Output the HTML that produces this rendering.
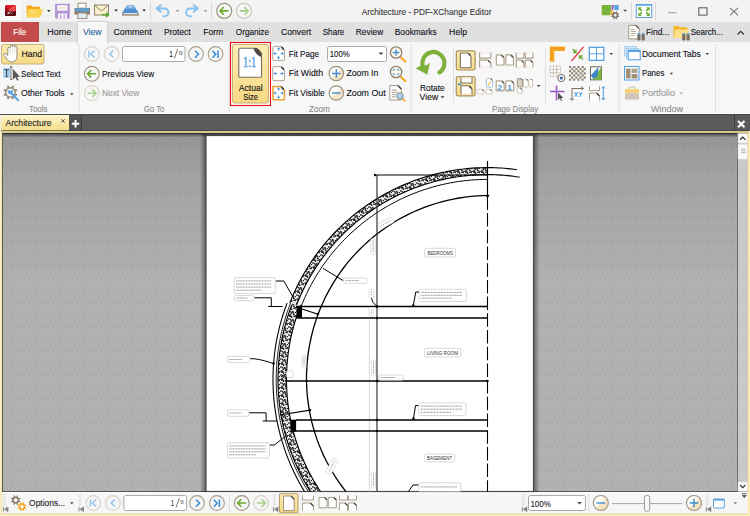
<!DOCTYPE html>
<html><head><meta charset="utf-8">
<style>
*{box-sizing:border-box;margin:0;padding:0}
html,body{width:750px;height:516px;overflow:hidden;background:#f3f3f3;font-family:"Liberation Sans",sans-serif;color:#1e1e1e}
.a{position:absolute}
svg text{white-space:pre}
#title{left:0;top:0;width:750px;height:22px;background:#f3f3f3}
#tabs{left:0;top:22px;width:750px;height:20.5px;background:#e0e0e0;border-bottom:1px solid #d4d4d4}
#ribbon{left:0;top:42px;width:750px;height:72px;background:#f7f7f7;border-bottom:1px solid #fdfdfd}
#doctabs{left:0;top:114px;width:750px;height:17px;background:#5b5b5b;border-top:1px solid #474747}
#frame{left:0;top:131px;width:750px;height:385px;background:#fde68c;border-left:1px solid #f7efdd;border-right:1px solid #f7eedb;border-bottom:1px solid #f7eed6}
#docarea{left:2px;top:133px;width:746px;height:359px;background:#a9a9a9;border-top:1px solid #2e3238;border-left:1px solid #5a5a5a;overflow:hidden}
#status{left:2px;top:491px;width:746px;height:23px;background:linear-gradient(#fdfdfd,#f6f6f6 3px);border-top:1px solid #555;border-bottom:1px solid #e2e2e0}

</style></head><body>
<div id="title" class="a"></div>
<div class="a" style="left:0;top:20px;width:750px;height:2px;background:#f0f0f0"></div>
<div id="tabs" class="a"></div>
<div class="a" style="left:1px;top:22px;width:38px;height:20.5px;background:#c24b4b"></div>
<div id="ribbon" class="a"></div>
<div class="a" style="left:76.5px;top:21px;width:31px;height:23px;background:#f7f7f7;border:1px solid #d2d2d2;border-bottom:none"></div>
<div id="doctabs" class="a"></div>
<div class="a" style="left:1px;top:114.5px;width:68px;height:17px;background:linear-gradient(#fdf3c6,#f9e49c 60%,#f7dc88);border-top:1px solid #fff6d8"></div>
<div class="a" style="left:69px;top:114.5px;width:13px;height:16px;background:#525252;border-right:1px solid #3e3e3e"></div>
<div class="a" style="left:734px;top:114.5px;width:1px;height:16px;background:#3e3e3e"></div>
<div class="a" style="left:0;top:114.5px;width:1px;height:17px;background:#ececec"></div>
<div id="frame" class="a"></div>
<div class="a" style="left:1px;top:131px;width:748px;height:2px;background:#d9cb86;box-shadow:0 -0.6px 0 #363b40"></div>
<div id="docarea" class="a"></div>
<div id="status" class="a"></div>

<svg class="a" style="left:0;top:0" width="260" height="22" viewBox="0 0 260 22">
 <rect x="1" y="1" width="21" height="19" fill="#f8f8f8"/>
 <line x1="22.5" y1="2" x2="22.5" y2="20" stroke="#e9e9e9"/>
 <!-- app icon -->
 <rect x="5" y="5" width="11" height="11" rx="1.6" fill="#dc1c26"/>
 <path d="M5 11.2 h11 v3.2 a1.6 1.6 0 0 1 -1.6 1.6 h-7.8 a1.6 1.6 0 0 1 -1.6 -1.6z" fill="#5c0a10"/>
 <path d="M5.5 5.5 L10.5 11.2 L5 11.2z" fill="#a8121c"/>
 <path d="M9.6 12.8 L15.2 6.6 M11.3 13.6 L15.8 8.6 M8.8 11.2 L13.2 6.2" stroke="#fff" stroke-width="0.85" stroke-dasharray="1 0.7"/>
 <path d="M7 13.8 L8.4 12 L9.8 13.8z" fill="#fff"/>
 <!-- folder -->
 <path d="M26.7 5.5 h4.5 l1.3 1.3 h7.5 v10.5 h-13.3z" fill="#f7a61a"/>
 <path d="M28.3 9 h14.7 l-2.6 8.3 h-13.6z" fill="#fdd352"/>
 <path d="M29.5 11 l9 -1 -6 5z" fill="#fde08a" opacity="0.6"/>
 <path d="M47 10 h3.6 l-1.8 2z" fill="#222"/>
 <!-- floppy -->
 <path d="M55 3.8 h14.8 v14.8 h-13.5 l-1.3 -1.3z" fill="#b597d4"/>
 <rect x="57.4" y="5.3" width="10" height="5.3" fill="#fff"/>
 <rect x="58.5" y="6.8" width="7.8" height="2.5" fill="#ece8dc"/>
 <rect x="58.2" y="13.6" width="8.6" height="5" fill="#fff"/>
 <rect x="60" y="14.5" width="1.4" height="4" fill="#b597d4"/>
 <rect x="63.5" y="14.5" width="1.4" height="4" fill="#b597d4"/>
 <!-- printer -->
 <rect x="78" y="3.2" width="8" height="5" fill="#fff" stroke="#9e9078" stroke-width="1"/>
 <path d="M74.5 8 h15.5 v6.5 h-15.5z" fill="#8c7d66"/>
 <rect x="75.5" y="8.3" width="13.5" height="3.2" fill="#5aa0dc"/>
 <rect x="77.8" y="13" width="9" height="5.5" fill="#dff0f8" stroke="#9e9078" stroke-width="1"/>
 <!-- mail -->
 <rect x="94.5" y="5" width="14" height="10" fill="#fbefcf" stroke="#8f8270" stroke-width="1"/>
 <path d="M94.5 5 L101.5 11 L108.5 5" fill="none" stroke="#8f8270" stroke-width="1"/>
 <path d="M102 14.7 h6.5 M106 12.5 l2.5 2.2 -2.5 2.2" fill="none" stroke="#5aa528" stroke-width="1.5"/>
 <path d="M114.3 9.5 h3.6 l-1.8 2z" fill="#222"/>
 <!-- scanner -->
 <path d="M127 5.5 h6.8 l5 7.8 h-17z" fill="#4d8fd0"/>
 <path d="M127 5.5 h6.8 l2 3.2 h-10.5z" fill="#7ab4e6"/>
 <rect x="129" y="6.3" width="2.5" height="1" fill="#fff"/>
 <rect x="122" y="13.3" width="16.8" height="2.3" fill="#8d7f6b"/>
 <rect x="123.5" y="13.3" width="14" height="1" fill="#fff"/>
 <path d="M142.3 9.5 h3.6 l-1.8 2z" fill="#222"/>
 <line x1="150.5" y1="2" x2="150.5" y2="20" stroke="#dadada"/>
 <!-- undo -->
 <path d="M160.8 5.2 L156.6 8.5 L160.8 11.8 M157 8.5 H164.5 A3.9 3.9 0 0 1 164.5 16.3 H163.5" fill="none" stroke="#86c0ec" stroke-width="2" stroke-linecap="round" stroke-linejoin="round"/>
 <path d="M176 10.2 h3.2 l-1.6 1.8z" fill="#777"/>
 <!-- redo -->
 <path d="M193.7 5.2 L197.9 8.5 L193.7 11.8 M197.5 8.5 H190 A3.9 3.9 0 0 0 190 16.3 H191" fill="none" stroke="#86c0ec" stroke-width="2" stroke-linecap="round" stroke-linejoin="round"/>
 <path d="M204 10.2 h3.2 l-1.6 1.8z" fill="#777"/>
 <line x1="211.5" y1="2" x2="211.5" y2="20" stroke="#dadada"/>
 <!-- back / fwd -->
 <circle cx="224.2" cy="10.9" r="7.5" fill="#f7f7f7" stroke="#9c927f" stroke-width="1.2"/>
 <path d="M220 10.9 h8.5 M223.8 7 l-3.8 3.9 3.8 3.9" fill="none" stroke="#6aab2e" stroke-width="1.6"/>
 <circle cx="244" cy="10.9" r="7.5" fill="#f7f7f7" stroke="#cfc9bd" stroke-width="1.2"/>
 <path d="M248.2 10.9 h-8.5 M244.4 7 l3.8 3.9 -3.8 3.9" fill="none" stroke="#a8d08a" stroke-width="1.6"/>
</svg>
<svg class="a" style="left:596px;top:0" width="154" height="22" viewBox="596 0 154 22">
 <!-- theme icon -->
 <path d="M603.2 5 h8.6 l-1.8 10.3 h-7.5 a0.8 0.8 0 0 1 -0.8 -0.8 v-8.7 a0.8 0.8 0 0 1 0.8 -0.8z" fill="#7ab33c"/>
 <path d="M612.2 5 h1.8 l-0.9 5 h-1.8z" fill="#9b59c8"/>
 <path d="M611.1 10.3 h1.8 l-0.9 5 h-1.8z" fill="#f5b030"/>
 <rect x="614.2" y="5" width="4.6" height="5" fill="#5aa5e0"/>
 <path d="M618.20 15.20 L618.13 15.85 L619.23 16.37 L618.88 17.22 L617.73 16.81 L617.32 17.32 L616.81 17.73 L617.22 18.88 L616.37 19.23 L615.85 18.13 L615.20 18.20 L614.55 18.13 L614.03 19.23 L613.18 18.88 L613.59 17.73 L613.08 17.32 L612.67 16.81 L611.52 17.22 L611.17 16.37 L612.27 15.85 L612.20 15.20 L612.27 14.55 L611.17 14.03 L611.52 13.18 L612.67 13.59 L613.08 13.08 L613.59 12.67 L613.18 11.52 L614.03 11.17 L614.55 12.27 L615.20 12.20 L615.85 12.27 L616.37 11.17 L617.22 11.52 L616.81 12.67 L617.32 13.08 L617.73 13.59 L618.88 13.18 L619.23 14.03 L618.13 14.55Z M615.2 13.70 a1.50 1.50 0 1 0 0.01 0z" fill="#7a6f5f" fill-rule="evenodd"/>
 <path d="M623.3 9.8 h3.6 l-1.8 2z" fill="#333"/>
 <line x1="631.5" y1="2" x2="631.5" y2="20" stroke="#dadada"/>
 <rect x="636.3" y="4.5" width="15.4" height="13" fill="#fff" stroke="#5aa0dc" stroke-width="1"/>
 <rect x="636.3" y="4.5" width="15.4" height="1.2" fill="#5aa0dc"/>
 <g fill="#6aab2e">
  <path d="M638.3 7.3 h3.5 l-1.2 1.2 1.8 1.8 -1.2 1.2 -1.8 -1.8 -1.1 1.1z"/>
  <path d="M649.7 7.3 h-3.5 l1.2 1.2 -1.8 1.8 1.2 1.2 1.8 -1.8 1.1 1.1z"/>
  <path d="M638.3 16 h3.5 l-1.2 -1.2 1.8 -1.8 -1.2 -1.2 -1.8 1.8 -1.1 -1.1z"/>
  <path d="M649.7 16 h-3.5 l1.2 -1.2 -1.8 -1.8 1.2 -1.2 1.8 1.8 1.1 -1.1z"/>
 </g>
 <line x1="655.5" y1="2" x2="655.5" y2="20" stroke="#dadada"/>
 <line x1="668" y1="12.8" x2="676.5" y2="12.8" stroke="#999" stroke-width="1"/>
 <rect x="698.8" y="7.8" width="8.2" height="7.3" fill="none" stroke="#555" stroke-width="1"/>
 <path d="M730 7.8 L738 15.3 M738 7.8 L730 15.3" stroke="#444" stroke-width="1"/>
</svg>
<svg class="a" style="left:620px;top:22px" width="130" height="20" viewBox="620 22 130 20">
 <path d="M628.8 25.3 h7 l3.3 3.3 v10.3 h-10.3z" fill="#fff" stroke="#a09580" stroke-width="1"/>
 <path d="M635.8 25.3 l3.3 3.3" stroke="#555" stroke-width="1.3"/>
 <path d="M630.8 29.5 h3.5 M630.8 31.5 h5 M630.8 33.5 h5 M630.8 35.5 h4" stroke="#a09580" stroke-width="0.8"/>
 <rect x="637.3" y="34" width="3.2" height="6.5" rx="1" fill="#7a6f5f"/>
 <rect x="641.6" y="34" width="3.2" height="6.5" rx="1" fill="#7a6f5f"/>
 <rect x="637.6" y="33" width="2.6" height="1.6" fill="#5aa0dc"/>
 <rect x="641.9" y="33" width="2.6" height="1.6" fill="#5aa0dc"/>
 <path d="M673.5 26 h5 l1.3 1.3 h7.5 v10.7 h-13.8z" fill="#f7b32a"/>
 <path d="M674.8 29.5 h14.5 l-2.3 8.5 h-13z" fill="#fde08a"/>
 <rect x="682.2" y="34" width="3.2" height="6.5" rx="1" fill="#7a6f5f"/>
 <rect x="686.5" y="34" width="3.2" height="6.5" rx="1" fill="#7a6f5f"/>
 <rect x="682.5" y="33" width="2.6" height="1.6" fill="#5aa0dc"/>
 <rect x="686.8" y="33" width="2.6" height="1.6" fill="#5aa0dc"/>
 <path d="M737.5 34.5 l3.2 -3.2 3.2 3.2" fill="none" stroke="#333" stroke-width="1.2"/>
</svg>
<svg class="a" style="left:0;top:42px" width="750" height="72" viewBox="0 42 750 72">
 <defs>
  <linearGradient id="yel" x1="0" y1="0" x2="0" y2="1"><stop offset="0" stop-color="#fcedb5"/><stop offset="1" stop-color="#f7d983"/></linearGradient>
  <linearGradient id="cream" x1="0" y1="0" x2="1" y2="1"><stop offset="0.45" stop-color="#fdfbf5"/><stop offset="0.55" stop-color="#f3e3c3"/></linearGradient>
 </defs>
 <!-- Tools group -->
 <rect x="1.5" y="44.5" width="42.5" height="19.5" rx="2" fill="url(#yel)" stroke="#c8b07c" stroke-width="1"/>
 <path d="M7.8 55.5 V48.3 a1.15 1.15 0 0 1 2.3 0 V46.6 a1.15 1.15 0 0 1 2.3 0 V46.2 a1.15 1.15 0 0 1 2.3 0 V47.2 a1.15 1.15 0 0 1 2.3 0 V56 c0 3.8 -2.2 6 -5 6 c-2.4 0 -3.6 -1 -5 -2.8 l-3 -3.6 a1.3 1.3 0 0 1 2 -1.7 z" fill="#fff" stroke="#8a8070" stroke-width="0.9"/>
 <path d="M10.1 48.3 v5 M12.4 46.6 v6.5 M14.7 47.2 v6" stroke="#d8d4cc" stroke-width="0.7"/>
 <rect x="3.1" y="67.9" width="6.8" height="9.9" fill="#a8d0f0"/>
 <path d="M4.3 69.8 h4.6 M6.6 69.8 v6.8 M5.6 76.6 h2" stroke="#2a2a3a" stroke-width="0.9" fill="none"/>
 <rect x="10.2" y="66.8" width="1.8" height="12.5" fill="#dadada" stroke="#777" stroke-width="0.5"/><path d="M10 66.7 h2.2 M10 79.4 h2.2" stroke="#555" stroke-width="0.8"/>
 <path d="M13 69 v10.5 l2.5 -2.3 l1.7 3.6 l1.5 -0.7 l-1.7 -3.4 h3z" fill="#5a5a5a"/>
 <path d="M15.70 92.40 L15.61 93.39 L17.30 94.06 L16.45 96.11 L14.78 95.38 L14.15 96.15 L13.38 96.78 L14.11 98.45 L12.06 99.30 L11.39 97.61 L10.40 97.70 L9.41 97.61 L8.74 99.30 L6.69 98.45 L7.42 96.78 L6.65 96.15 L6.02 95.38 L4.35 96.11 L3.50 94.06 L5.19 93.39 L5.10 92.40 L5.19 91.41 L3.50 90.74 L4.35 88.69 L6.02 89.42 L6.65 88.65 L7.42 88.02 L6.69 86.35 L8.74 85.50 L9.41 87.19 L10.40 87.10 L11.39 87.19 L12.06 85.50 L14.11 86.35 L13.38 88.02 L14.15 88.65 L14.78 89.42 L16.45 88.69 L17.30 90.74 L15.61 91.41Z M10.4 88.4 a4 4 0 1 0 0.01 0z" fill="#978c7a" fill-rule="evenodd"/>
 <path d="M11 93 L18.3 100.3" stroke="#5aa5e6" stroke-width="2" stroke-linecap="round"/>
 <path d="M8.2 90.2 a2.6 2.6 0 1 0 3.8 -0.6 l-1.6 1.6 -1.3 -1.3 z" fill="#5aa5e6"/>
 <path d="M70 93.3 h3.6 l-1.8 2z" fill="#444"/>
 <line x1="79" y1="44" x2="79" y2="112.5" stroke="#e0e0e0"/>
 <!-- Go To -->
 <circle cx="91.8" cy="54" r="7.4" fill="#f7f7f7" stroke="#d8d2c6" stroke-width="1.1"/>
 <path d="M89 50.5 v7 M94.5 50.5 l-3.5 3.5 3.5 3.5" fill="none" stroke="#8cc0ea" stroke-width="1.4"/>
 <circle cx="111.6" cy="54" r="7.4" fill="#f7f7f7" stroke="#d8d2c6" stroke-width="1.1"/>
 <path d="M113.3 50.5 l-3.5 3.5 3.5 3.5" fill="none" stroke="#8cc0ea" stroke-width="1.4"/>
 <rect x="122.5" y="46.5" width="62.5" height="15" rx="2" fill="#fff" stroke="#a9a9a9" stroke-width="1"/>
 <circle cx="196" cy="54" r="7.4" fill="#f7f7f7" stroke="#a89d88" stroke-width="1.1"/>
 <path d="M195 50.7 l3.5 3.5 -3.5 3.5" fill="none" stroke="#3d8fd8" stroke-width="1.6"/>
 <circle cx="215.6" cy="54" r="7.4" fill="#f7f7f7" stroke="#a89d88" stroke-width="1.1"/>
 <path d="M212.5 50.7 l3.2 3.5 -3.2 3.5 M218 50.5 v7.4" fill="none" stroke="#3d8fd8" stroke-width="1.6"/>
 <circle cx="91.8" cy="73.8" r="7.4" fill="#f7f7f7" stroke="#9c927f" stroke-width="1.1"/>
 <path d="M87.6 73.8 h8.5 M91.3 70 l-3.7 3.8 3.7 3.8" fill="none" stroke="#6aab2e" stroke-width="1.6"/>
 <circle cx="91.8" cy="93.2" r="7.4" fill="#f7f7f7" stroke="#d8d2c6" stroke-width="1.1"/>
 <path d="M96 93.2 h-8.5 M92.3 89.4 l3.7 3.8 -3.7 3.8" fill="none" stroke="#a8d08a" stroke-width="1.6"/>
 <path d="M177.6 49.2 L174.3 58.6" stroke="#666" stroke-width="0.9"/>
 <line x1="229.3" y1="44" x2="229.3" y2="112.5" stroke="#e0e0e0"/>
 <!-- Zoom -->
 <rect x="230.5" y="42.5" width="40" height="63" fill="none" stroke="#f01010" stroke-width="1.1"/>
 <rect x="232.5" y="44.5" width="36" height="58.5" rx="2" fill="url(#yel)" stroke="#c8b07c" stroke-width="1"/>
 <path d="M239.8 48.3 h16.7 l5 5 v23 a1 1 0 0 1 -1 1 h-20.7 a1 1 0 0 1 -1 -1 v-27 a1 1 0 0 1 1 -1z" fill="#fff" stroke="#7a6e60" stroke-width="1.1"/>
 <path d="M253.5 48.3 H256.5 Q261.5 50.5 261.5 57 Q255.5 55.5 253.5 48.3z" fill="#4f4a44"/>
 <text x="243" y="67.4" font-size="14" fill="#4a9be0" font-family="Liberation Serif" stroke="#4a9be0" stroke-width="0.4" textLength="13.3" lengthAdjust="spacingAndGlyphs">1:1</text>
 <path d="M273.6 46.6 H281.0 L284.5 50.4 V59.6 a0.8 0.8 0 0 1 -0.8 0.8 H273.6 a0.8 0.8 0 0 1 -0.8 -0.8 V47.4 a0.8 0.8 0 0 1 0.8 -0.8z" fill="#fff" stroke="#b0a590" stroke-width="1"/><path d="M280.7 46.6 H282.0 Q284.5 47.6 284.5 50.5 Q281.3 49.800000000000004 280.7 46.6z" fill="#4f4a44"/>
 <path d="M278.6 47.3 L276.8 49.3 L280.40000000000003 49.3z M278.1 49.3 v1.5 h1 v-1.5z" fill="#4a9be0"/><path d="M278.6 59.5 L276.8 57.5 L280.40000000000003 57.5z M278.1 57.5 v-1.5 h1 v1.5z" fill="#4a9be0"/><path d="M273.2 53.5 L275.2 51.7 L275.2 55.3z M275.2 53.0 h1.5 v1 h-1.5z" fill="#4a9be0"/><path d="M284 53.5 L282 51.7 L282 55.3z M282 53.0 h-1.5 v1 h1.5z" fill="#4a9be0"/>
 <path d="M273.6 66.6 H281.0 L284.5 70.39999999999999 V79.8 a0.8 0.8 0 0 1 -0.8 0.8 H273.6 a0.8 0.8 0 0 1 -0.8 -0.8 V67.39999999999999 a0.8 0.8 0 0 1 0.8 -0.8z" fill="#fff" stroke="#b0a590" stroke-width="1"/><path d="M280.7 66.6 H282.0 Q284.5 67.6 284.5 70.5 Q281.3 69.8 280.7 66.6z" fill="#4f4a44"/>
 <path d="M273.5 73.6 L275.5 71.8 L275.5 75.39999999999999z M275.5 73.1 h1.5 v1 h-1.5z" fill="#4a9be0"/><path d="M283.7 73.6 L281.7 71.8 L281.7 75.39999999999999z M281.7 73.1 h-1.5 v1 h1.5z" fill="#4a9be0"/>
 <path d="M273.7 86.4 H280.9 L284.4 90.2 V99.0 a0.8 0.8 0 0 1 -0.8 0.8 H273.7 a0.8 0.8 0 0 1 -0.8 -0.8 V87.2 a0.8 0.8 0 0 1 0.8 -0.8z" fill="#fff" stroke="#f0a030" stroke-width="1.5"/><path d="M280.59999999999997 86.4 H281.9 Q284.4 87.4 284.4 90.30000000000001 Q281.2 89.60000000000001 280.59999999999997 86.4z" fill="#4f4a44"/>
 <path d="M278.6 87.2 L276.8 89.2 L280.40000000000003 89.2z M278.1 89.2 v1.5 h1 v-1.5z" fill="#4a9be0"/><path d="M278.6 98.8 L276.8 96.8 L280.40000000000003 96.8z M278.1 96.8 v-1.5 h1 v1.5z" fill="#4a9be0"/><path d="M273.3 93 L275.3 91.2 L275.3 94.8z M275.3 92.5 h1.5 v1 h-1.5z" fill="#4a9be0"/><path d="M283.9 93 L281.9 91.2 L281.9 94.8z M281.9 92.5 h-1.5 v1 h1.5z" fill="#4a9be0"/>
 <rect x="327.5" y="46.5" width="59" height="15" rx="2" fill="#fff" stroke="#a9a9a9" stroke-width="1"/>
 <path d="M378.6 52.5 h4.8 l-2.4 2.5z" fill="#444"/>
 <circle cx="336.3" cy="73.5" r="7.2" fill="url(#cream)" stroke="#9c927f" stroke-width="1.2"/>
 <path d="M332 73.5 h8.6 M336.3 69.2 v8.6" stroke="#3d8fd8" stroke-width="1.4"/>
 <circle cx="336.3" cy="93" r="7.2" fill="url(#cream)" stroke="#9c927f" stroke-width="1.2"/>
 <path d="M332 93 h8.6" stroke="#3d8fd8" stroke-width="1.4"/>
 <path d="M401 57.5 l4.2 4" stroke="#f5a623" stroke-width="2.2" stroke-linecap="round"/>
 <circle cx="396.1" cy="52.5" r="5.7" fill="#fdf6e6" stroke="#8d826f" stroke-width="1.3"/>
 <path d="M392.8 52.5 h6.6 M396.1 49.2 v6.6" stroke="#3d8fd8" stroke-width="1.3"/>
 <path d="M401 77 l4.2 4" stroke="#f5a623" stroke-width="2.2" stroke-linecap="round"/>
 <circle cx="396.1" cy="72" r="5.7" fill="#fdf6e6" stroke="#8d826f" stroke-width="1.3"/>
 <path d="M393.5 71 v-1.5 h1.5 M397.2 69.5 h1.5 v1.5 M398.7 73 v1.5 h-1.5 M395 74.5 h-1.5 v-1.5" stroke="#4a9be0" stroke-width="0.9" fill="none"/>
 <path d="M389.8 85.5 h8 l3.5 3.5 v11 h-11.5z" fill="#fff" stroke="#a59a88" stroke-width="1"/>
 <path d="M397.8 85.5 l3.5 3.5" stroke="#444" stroke-width="1.5"/>
 <path d="M391.8 90 h5 M391.8 92.3 h6 M391.8 94.6 h4 M391.8 96.9 h4" stroke="#8d826f" stroke-width="0.8"/>
 <path d="M402 98 l3 3" stroke="#f5a623" stroke-width="1.6" stroke-linecap="round"/>
 <circle cx="400" cy="96" r="3.3" fill="#a9d0f0" stroke="#8d826f" stroke-width="0.9"/>
 <line x1="411" y1="44" x2="411" y2="112.5" stroke="#e0e0e0"/>
 <!-- Rotate view -->
 <path d="M439.3 72.5 A11.1 11.1 0 1 0 422.4 64.6" fill="none" stroke="#7db13c" stroke-width="4.2" stroke-linecap="round"/>
 <path d="M415.8 68.2 L427.3 74.8 L430 62.5 L426.5 65.5 L423 64.5z" fill="#7db13c"/>
 <path d="M440.5 96.3 h4 l-2 2.2z" fill="#444"/>
 <line x1="453.5" y1="48" x2="453.5" y2="103" stroke="#e0e0e0"/>
 <!-- Page display -->
 <rect x="456.3" y="50.8" width="18.8" height="19.2" rx="1.8" fill="url(#yel)" stroke="#a89060" stroke-width="1.2"/>
 <path d="M461.1 53 H467.8 L471 56.2 V67.0 a0.8 0.8 0 0 1 -0.8 0.8 H461.1 a0.8 0.8 0 0 1 -0.8 -0.8 V53.8 a0.8 0.8 0 0 1 0.8 -0.8z" fill="#fff" stroke="#7a6e60" stroke-width="1.1"/><path d="M467.8 53 H469.08 Q471 53.96 471 56.20 Q468.28 55.72 467.8 53z" fill="#4f4a44"/>
 <rect x="456.3" y="76.6" width="18.8" height="19.2" rx="1.8" fill="url(#yel)" stroke="#a89060" stroke-width="1.2"/>
 <path d="M461 77.5 V83 H472 V77.5" fill="#fff" stroke="#7a6e60" stroke-width="1.1"/><rect x="461.6" y="77.5" width="9.8" height="1.2" fill="#f6e3dc"/>
 <path d="M461 94.5 V85.8 H468.8 L472 89.0 V94.5" fill="#fff" stroke="#7a6e60" stroke-width="1.1"/><path d="M468.8 85.8 H470.08 Q472 86.76 472 89.00 Q469.28 88.52 468.8 85.8z" fill="#4f4a44"/><rect x="461.6" y="93.3" width="9.8" height="1.2" fill="#f6e3dc"/>
 <path d="M458 84.4 h3.2" stroke="#3d8fd8" stroke-width="1.4"/><path d="M457.5 84.4 l1.6 -1.3 v2.6z" fill="#3d8fd8"/>
 <path d="M479.6 52.6 V58.2 H490.8 V52.6" fill="#fff" stroke="#ada28e" stroke-width="1.2"/><rect x="480.20000000000005" y="52.6" width="10.0" height="1.2" fill="#f6e3dc"/>
 <path d="M479.6 67.6 V60.2 H487.8 L490.8 63.2 V67.6" fill="#fff" stroke="#ada28e" stroke-width="1.2"/><path d="M487.8 60.2 H489.00 Q490.8 61.10 490.8 63.20 Q488.25 62.75 487.8 60.2z" fill="#4f4a44"/><rect x="480.20000000000005" y="66.39999999999999" width="10.0" height="1.2" fill="#f6e3dc"/>
 <path d="M497.1 54.8 H501 L504 57.8 V64.2 a0.8 0.8 0 0 1 -0.8 0.8 H497.1 a0.8 0.8 0 0 1 -0.8 -0.8 V55.599999999999994 a0.8 0.8 0 0 1 0.8 -0.8z" fill="#fff" stroke="#ada28e" stroke-width="1.2"/><path d="M501 54.8 H502.20 Q504 55.70 504 57.80 Q501.45 57.35 501 54.8z" fill="#4f4a44"/>
 <path d="M506.6 54.8 H510.5 L513.5 57.8 V64.2 a0.8 0.8 0 0 1 -0.8 0.8 H506.6 a0.8 0.8 0 0 1 -0.8 -0.8 V55.599999999999994 a0.8 0.8 0 0 1 0.8 -0.8z" fill="#fff" stroke="#ada28e" stroke-width="1.2"/><path d="M510.5 54.8 H511.70 Q513.5 55.70 513.5 57.80 Q510.95 57.35 510.5 54.8z" fill="#4f4a44"/>
 <path d="M516.3 52.6 V58.2 H523.9 V52.6" fill="#fff" stroke="#ada28e" stroke-width="1.2"/><rect x="516.9" y="52.6" width="6.4" height="1.2" fill="#f6e3dc"/>
 <path d="M525.2 52.6 V58.2 H532.8 V52.6" fill="#fff" stroke="#ada28e" stroke-width="1.2"/><rect x="525.8000000000001" y="52.6" width="6.4" height="1.2" fill="#f6e3dc"/>
 <path d="M516.3 67.6 V60.2 H521.3 L523.9 62.800000000000004 V67.6" fill="#fff" stroke="#ada28e" stroke-width="1.2"/><path d="M521.3 60.2 H522.34 Q523.9 60.98 523.9 62.80 Q521.69 62.41 521.3 60.2z" fill="#4f4a44"/><rect x="516.9" y="66.39999999999999" width="6.4" height="1.2" fill="#f6e3dc"/>
 <path d="M525.2 67.6 V60.2 H530.1999999999999 L532.8 62.800000000000004 V67.6" fill="#fff" stroke="#ada28e" stroke-width="1.2"/><path d="M530.1999999999999 60.2 H531.24 Q532.8 60.98 532.8 62.80 Q530.59 62.41 530.1999999999999 60.2z" fill="#4f4a44"/><rect x="525.8000000000001" y="66.39999999999999" width="6.4" height="1.2" fill="#f6e3dc"/>
 <path d="M478.5 89.3 H481.8 L483.8 91.3 V93.2 a0.8 0.8 0 0 1 -0.8 0.8 H478.5 a0.8 0.8 0 0 1 -0.8 -0.8 V90.1 a0.8 0.8 0 0 1 0.8 -0.8z" fill="#fff" stroke="#cfc6b6" stroke-width="0.9"/><path d="M481.8 89.3 H482.60 Q483.8 89.90 483.8 91.30 Q482.10 91.00 481.8 89.3z" fill="#4f4a44"/>
 <path d="M486.7 89.3 H490 L492 91.3 V93.2 a0.8 0.8 0 0 1 -0.8 0.8 H486.7 a0.8 0.8 0 0 1 -0.8 -0.8 V90.1 a0.8 0.8 0 0 1 0.8 -0.8z" fill="#fff" stroke="#cfc6b6" stroke-width="0.9"/><path d="M490 89.3 H490.80 Q492 89.90 492 91.30 Q490.30 91.00 490 89.3z" fill="#4f4a44"/>
 <path d="M487.2 78.6 H490.40000000000003 L492.6 80.8 V86.2 a0.8 0.8 0 0 1 -0.8 0.8 H487.2 a0.8 0.8 0 0 1 -0.8 -0.8 V79.39999999999999 a0.8 0.8 0 0 1 0.8 -0.8z" fill="#fff" stroke="#8cc0ea" stroke-width="0.9"/><path d="M490.40000000000003 78.6 H491.28 Q492.6 79.26 492.6 80.80 Q490.73 80.47 490.40000000000003 78.6z" fill="#4f4a44"/>
 <path d="M487.8 85.5 L491 81.5" stroke="#f0b040" stroke-width="1.2"/>
 <path d="M497.0 80.9 H501.59999999999997 L504.2 83.5 V90.0 a0.8 0.8 0 0 1 -0.8 0.8 H497.0 a0.8 0.8 0 0 1 -0.8 -0.8 V81.7 a0.8 0.8 0 0 1 0.8 -0.8z" fill="#fff" stroke="#ada28e" stroke-width="1.2"/><path d="M501.59999999999997 80.9 H502.64 Q504.2 81.68 504.2 83.50 Q501.99 83.11 501.59999999999997 80.9z" fill="#4f4a44"/>
 <path d="M506.6 80.9 H511.19999999999993 L513.8 83.5 V90.0 a0.8 0.8 0 0 1 -0.8 0.8 H506.6 a0.8 0.8 0 0 1 -0.8 -0.8 V81.7 a0.8 0.8 0 0 1 0.8 -0.8z" fill="#fff" stroke="#ada28e" stroke-width="1.2"/><path d="M511.19999999999993 80.9 H512.24 Q513.8 81.68 513.8 83.50 Q511.59 83.11 511.19999999999993 80.9z" fill="#4f4a44"/>
 <text x="497.6" y="89.8" font-size="8" font-weight="bold" fill="#3d8fd8" font-family="Liberation Sans">2</text>
 <text x="507.3" y="89.8" font-size="8" font-weight="bold" fill="#3d8fd8" font-family="Liberation Sans">1</text>
 <path d="M518.0999999999999 78.6 H520.6 L522.6 80.6 V86.2 a0.8 0.8 0 0 1 -0.8 0.8 H518.0999999999999 a0.8 0.8 0 0 1 -0.8 -0.8 V79.39999999999999 a0.8 0.8 0 0 1 0.8 -0.8z" fill="#d8d0c4" stroke="#a09580" stroke-width="1"/><path d="M520.6 78.6 H521.40 Q522.6 79.20 522.6 80.60 Q520.90 80.30 520.6 78.6z" fill="#4f4a44"/>
 <path d="M524.3 79 H526.3 L528.3 81 V86.2 a0.8 0.8 0 0 1 -0.8 0.8 H524.3 a0.8 0.8 0 0 1 -0.8 -0.8 V79.8 a0.8 0.8 0 0 1 0.8 -0.8z" fill="#fff" stroke="#cfc6b6" stroke-width="1"/><path d="M526.3 79 H527.10 Q528.3 79.60 528.3 81.00 Q526.60 80.70 526.3 79z" fill="#4f4a44"/>
 <path d="M529.8 79 H531.1 L532.6 80.5 V86.2 a0.8 0.8 0 0 1 -0.8 0.8 H529.8 a0.8 0.8 0 0 1 -0.8 -0.8 V79.8 a0.8 0.8 0 0 1 0.8 -0.8z" fill="#fff" stroke="#cfc6b6" stroke-width="1"/><path d="M531.1 79 H531.70 Q532.6 79.45 532.6 80.50 Q531.33 80.28 531.1 79z" fill="#4f4a44"/>
 <path d="M518.0999999999999 88 H520.3 L522.3 90 V92.4 a0.8 0.8 0 0 1 -0.8 0.8 H518.0999999999999 a0.8 0.8 0 0 1 -0.8 -0.8 V88.8 a0.8 0.8 0 0 1 0.8 -0.8z" fill="#fff" stroke="#cfc6b6" stroke-width="1"/><path d="M520.3 88 H521.10 Q522.3 88.60 522.3 90.00 Q520.60 89.70 520.3 88z" fill="#4f4a44"/>
 <path d="M537 85 h3.6 l-1.8 2z" fill="#444"/>
 <line x1="545.5" y1="48" x2="545.5" y2="103" stroke="#e0e0e0"/>
 <!-- ruler -->
 <path d="M549.8 46.5 h15.3 v4.5 h-10.8 v10.8 h-4.5z" fill="#f5a623"/>
 <path d="M552 47.5 v1.5 M554.5 47.5 v1.5 M557 47.5 v1.5 M559.5 47.5 v1.5 M562 47.5 v1.5 M550.8 53 h1.5 M550.8 55.5 h1.5 M550.8 58 h1.5" stroke="#c77a10" stroke-width="0.6"/>
 <path d="M571.5 61 L583.5 47" stroke="#e04040" stroke-width="1.3"/>
 <path d="M572.5 49 l3.5 3.5 M576 49.5 v3 h-3 M583 59.5 l-3.5 -3.5 M579.5 59 v-3 h3" stroke="#6aab2e" stroke-width="1.3" fill="none"/>
 <rect x="589.3" y="47.3" width="14.5" height="13" fill="#fff" stroke="#4a9be0" stroke-width="1.2"/>
 <path d="M596.5 47.3 v13 M589.3 53.8 h14.5" stroke="#4a9be0" stroke-width="0.9"/>
 <path d="M609.5 53 h3.6 l-1.8 2z" fill="#444"/>
 <g fill="#fff" stroke="#c5bcac" stroke-width="0.7">
  <rect x="550" y="66" width="3.3" height="3.3"/><rect x="553.5" y="66" width="3.3" height="3.3"/><rect x="557" y="66" width="3.3" height="3.3"/>
  <rect x="550" y="69.5" width="3.3" height="3.3"/><rect x="553.5" y="69.5" width="3.3" height="3.3"/><rect x="557" y="69.5" width="3.3" height="3.3"/>
  <rect x="550" y="73" width="3.3" height="3.3"/><rect x="553.5" y="73" width="3.3" height="3.3"/>
 </g>
 <circle cx="561.3" cy="78" r="3.6" fill="#fff" stroke="#6b6355" stroke-width="1"/>
 <circle cx="561.3" cy="78" r="1.6" fill="#2c5f9a"/>
 <g fill="#8d826f">
  <rect x="569" y="66" width="2.1" height="2.1"/><rect x="573.2" y="66" width="2.1" height="2.1"/><rect x="577.4" y="66" width="2.1" height="2.1"/><rect x="581.6" y="66" width="2.1" height="2.1"/>
  <rect x="571.1" y="68.1" width="2.1" height="2.1"/><rect x="575.3" y="68.1" width="2.1" height="2.1"/><rect x="579.5" y="68.1" width="2.1" height="2.1"/><rect x="583.7" y="68.1" width="2.1" height="2.1"/>
  <rect x="569" y="70.2" width="2.1" height="2.1"/><rect x="573.2" y="70.2" width="2.1" height="2.1"/><rect x="577.4" y="70.2" width="2.1" height="2.1"/><rect x="581.6" y="70.2" width="2.1" height="2.1"/>
  <rect x="571.1" y="72.3" width="2.1" height="2.1"/><rect x="575.3" y="72.3" width="2.1" height="2.1"/><rect x="579.5" y="72.3" width="2.1" height="2.1"/><rect x="583.7" y="72.3" width="2.1" height="2.1"/>
  <rect x="569" y="74.4" width="2.1" height="2.1"/><rect x="573.2" y="74.4" width="2.1" height="2.1"/><rect x="577.4" y="74.4" width="2.1" height="2.1"/><rect x="581.6" y="74.4" width="2.1" height="2.1"/>
  <rect x="571.1" y="76.5" width="2.1" height="2.1"/><rect x="575.3" y="76.5" width="2.1" height="2.1"/><rect x="579.5" y="76.5" width="2.1" height="2.1"/><rect x="583.7" y="76.5" width="2.1" height="2.1"/>
  <rect x="569" y="78.6" width="2.1" height="2.1"/><rect x="573.2" y="78.6" width="2.1" height="2.1"/><rect x="577.4" y="78.6" width="2.1" height="2.1"/><rect x="581.6" y="78.6" width="2.1" height="2.1"/>
 </g>
 <rect x="590.5" y="66.8" width="11" height="13" fill="#fff" stroke="#6b6355" stroke-width="1"/>
 <path d="M601.5 67 v12.8 h-9 z" fill="#7cb33a"/>
 <path d="M598.5 67 l-7.8 8.5 l3 3.5 l4 -3z" fill="#3d86c6"/>
 <path d="M556.5 85.5 v15 M550 91.5 h14.5" stroke="#9b59c8" stroke-width="1.5"/>
 <path d="M558 92.5 v7.5 l1.8 -1.7 l1.2 2.6 l1.1 -0.5 l-1.2 -2.5 h2.5z" fill="#555"/>
 <path d="M572 100 v-11.5 h11" fill="none" stroke="#6b6355" stroke-width="0.9"/>
 <path d="M569.8 98 l2.2 2.5 2.2 -2.5 M581 86.5 l2.5 2 -2.5 2" fill="none" stroke="#6b6355" stroke-width="0.9"/>
 <rect x="573.5" y="90" width="10" height="8.5" fill="#fff"/>
 <text x="573.8" y="97" font-size="6.5" fill="#4a9be0" font-family="Liberation Sans" font-weight="bold">XY</text>
 <g fill="#fff" stroke="#a09580" stroke-width="0.9">
  <path d="M589.5 86 v4.5 h10 v-4.5"/>
  <path d="M589.5 100.5 v-7.5 h7 l3 3 v4.5"/>
 </g>
 <path d="M596.5 93 l3 3" stroke="#333" stroke-width="1.1"/>
 <path d="M603.3 86.5 v13.5 M601.5 88.5 l1.8 -2 1.8 2 M601.5 98 l1.8 2 1.8 -2" fill="none" stroke="#4a9be0" stroke-width="1"/>
 <line x1="619" y1="44" x2="619" y2="112.5" stroke="#e0e0e0"/>
 <!-- Window -->
 <rect x="624.5" y="46.5" width="12" height="9.5" fill="#d7e8f7" stroke="#9cc6ec" stroke-width="0.8"/>
 <rect x="626.5" y="48.5" width="12" height="9.5" fill="#d7e8f7" stroke="#9cc6ec" stroke-width="0.8"/>
 <rect x="628.2" y="50.3" width="12" height="9.5" fill="#fff" stroke="#4a9be0" stroke-width="1"/>
 <rect x="628.2" y="50.3" width="12" height="1.6" fill="#4a9be0"/>
 <path d="M705.5 53 h3.6 l-1.8 2z" fill="#444"/>
 <rect x="624.5" y="66.5" width="14.5" height="13.5" fill="#fff" stroke="#4a9be0" stroke-width="1"/>
 <rect x="626" y="68.5" width="4.5" height="10" fill="#9e8f76"/>
 <rect x="631.5" y="68.5" width="6" height="4.5" fill="#b0a38c"/>
 <rect x="631.5" y="74" width="6" height="4.5" fill="#9e8f76"/>
 <path d="M669.5 72.8 h3.6 l-1.8 2z" fill="#444"/>
 <path d="M629 89 v-2 h6 v2" fill="none" stroke="#c8c0b0" stroke-width="1"/>
 <rect x="625" y="89" width="14" height="4.5" fill="#f6d37a"/>
 <rect x="625" y="93.5" width="14" height="6" fill="#cfc7b8"/>
 <circle cx="632" cy="93.5" r="1.2" fill="#fff" stroke="#b0a38c" stroke-width="0.6"/>
 <path d="M679.5 92.5 h3.6 l-1.8 2z" fill="#aaa"/>
 <line x1="715.5" y1="44" x2="715.5" y2="112.5" stroke="#e0e0e0"/>
</svg>
<svg class="a" style="left:0;top:0" width="750" height="516" viewBox="0 0 750 516">
<defs>
<pattern id="tex" width="12" height="12" patternUnits="userSpaceOnUse"><rect x="0" y="0" width="1" height="1" fill="#b5b5b5"/><rect x="1" y="0" width="1" height="1" fill="#b2b2b2"/><rect x="2" y="0" width="1" height="1" fill="#ababab"/><rect x="3" y="0" width="1" height="1" fill="#afafaf"/><rect x="4" y="0" width="1" height="1" fill="#b0b0b0"/><rect x="5" y="0" width="1" height="1" fill="#b1b1b1"/><rect x="6" y="0" width="1" height="1" fill="#adadad"/><rect x="7" y="0" width="1" height="1" fill="#a6a6a6"/><rect x="8" y="0" width="1" height="1" fill="#b5b5b5"/><rect x="9" y="0" width="1" height="1" fill="#b9b9b9"/><rect x="10" y="0" width="1" height="1" fill="#a5a5a5"/><rect x="11" y="0" width="1" height="1" fill="#adadad"/><rect x="0" y="1" width="1" height="1" fill="#b3b3b3"/><rect x="1" y="1" width="1" height="1" fill="#a5a5a5"/><rect x="2" y="1" width="1" height="1" fill="#a6a6a6"/><rect x="3" y="1" width="1" height="1" fill="#b6b6b6"/><rect x="4" y="1" width="1" height="1" fill="#b6b6b6"/><rect x="5" y="1" width="1" height="1" fill="#a6a6a6"/><rect x="6" y="1" width="1" height="1" fill="#a8a8a8"/><rect x="7" y="1" width="1" height="1" fill="#b1b1b1"/><rect x="8" y="1" width="1" height="1" fill="#b8b8b8"/><rect x="9" y="1" width="1" height="1" fill="#ababab"/><rect x="10" y="1" width="1" height="1" fill="#a5a5a5"/><rect x="11" y="1" width="1" height="1" fill="#b9b9b9"/><rect x="0" y="2" width="1" height="1" fill="#a6a6a6"/><rect x="1" y="2" width="1" height="1" fill="#a8a8a8"/><rect x="2" y="2" width="1" height="1" fill="#bababa"/><rect x="3" y="2" width="1" height="1" fill="#bababa"/><rect x="4" y="2" width="1" height="1" fill="#aeaeae"/><rect x="5" y="2" width="1" height="1" fill="#a5a5a5"/><rect x="6" y="2" width="1" height="1" fill="#b9b9b9"/><rect x="7" y="2" width="1" height="1" fill="#b9b9b9"/><rect x="8" y="2" width="1" height="1" fill="#ababab"/><rect x="9" y="2" width="1" height="1" fill="#a5a5a5"/><rect x="10" y="2" width="1" height="1" fill="#b3b3b3"/><rect x="11" y="2" width="1" height="1" fill="#b0b0b0"/><rect x="0" y="3" width="1" height="1" fill="#adadad"/><rect x="1" y="3" width="1" height="1" fill="#b2b2b2"/><rect x="2" y="3" width="1" height="1" fill="#b4b4b4"/><rect x="3" y="3" width="1" height="1" fill="#ababab"/><rect x="4" y="3" width="1" height="1" fill="#a7a7a7"/><rect x="5" y="3" width="1" height="1" fill="#b8b8b8"/><rect x="6" y="3" width="1" height="1" fill="#b1b1b1"/><rect x="7" y="3" width="1" height="1" fill="#aeaeae"/><rect x="8" y="3" width="1" height="1" fill="#a9a9a9"/><rect x="9" y="3" width="1" height="1" fill="#b8b8b8"/><rect x="10" y="3" width="1" height="1" fill="#bababa"/><rect x="11" y="3" width="1" height="1" fill="#a7a7a7"/><rect x="0" y="4" width="1" height="1" fill="#b1b1b1"/><rect x="1" y="4" width="1" height="1" fill="#b9b9b9"/><rect x="2" y="4" width="1" height="1" fill="#aeaeae"/><rect x="3" y="4" width="1" height="1" fill="#afafaf"/><rect x="4" y="4" width="1" height="1" fill="#b3b3b3"/><rect x="5" y="4" width="1" height="1" fill="#b5b5b5"/><rect x="6" y="4" width="1" height="1" fill="#a6a6a6"/><rect x="7" y="4" width="1" height="1" fill="#adadad"/><rect x="8" y="4" width="1" height="1" fill="#bbbbbb"/><rect x="9" y="4" width="1" height="1" fill="#b1b1b1"/><rect x="10" y="4" width="1" height="1" fill="#aeaeae"/><rect x="11" y="4" width="1" height="1" fill="#a5a5a5"/><rect x="0" y="5" width="1" height="1" fill="#b9b9b9"/><rect x="1" y="5" width="1" height="1" fill="#a8a8a8"/><rect x="2" y="5" width="1" height="1" fill="#acacac"/><rect x="3" y="5" width="1" height="1" fill="#bababa"/><rect x="4" y="5" width="1" height="1" fill="#b8b8b8"/><rect x="5" y="5" width="1" height="1" fill="#ababab"/><rect x="6" y="5" width="1" height="1" fill="#b1b1b1"/><rect x="7" y="5" width="1" height="1" fill="#b5b5b5"/><rect x="8" y="5" width="1" height="1" fill="#b7b7b7"/><rect x="9" y="5" width="1" height="1" fill="#aeaeae"/><rect x="10" y="5" width="1" height="1" fill="#acacac"/><rect x="11" y="5" width="1" height="1" fill="#b5b5b5"/><rect x="0" y="6" width="1" height="1" fill="#a9a9a9"/><rect x="1" y="6" width="1" height="1" fill="#a8a8a8"/><rect x="2" y="6" width="1" height="1" fill="#bcbcbc"/><rect x="3" y="6" width="1" height="1" fill="#b2b2b2"/><rect x="4" y="6" width="1" height="1" fill="#b0b0b0"/><rect x="5" y="6" width="1" height="1" fill="#b1b1b1"/><rect x="6" y="6" width="1" height="1" fill="#b3b3b3"/><rect x="7" y="6" width="1" height="1" fill="#b1b1b1"/><rect x="8" y="6" width="1" height="1" fill="#aeaeae"/><rect x="9" y="6" width="1" height="1" fill="#a9a9a9"/><rect x="10" y="6" width="1" height="1" fill="#b8b8b8"/><rect x="11" y="6" width="1" height="1" fill="#b7b7b7"/><rect x="0" y="7" width="1" height="1" fill="#aaaaaa"/><rect x="1" y="7" width="1" height="1" fill="#bbbbbb"/><rect x="2" y="7" width="1" height="1" fill="#b7b7b7"/><rect x="3" y="7" width="1" height="1" fill="#a9a9a9"/><rect x="4" y="7" width="1" height="1" fill="#aeaeae"/><rect x="5" y="7" width="1" height="1" fill="#b1b1b1"/><rect x="6" y="7" width="1" height="1" fill="#b1b1b1"/><rect x="7" y="7" width="1" height="1" fill="#adadad"/><rect x="8" y="7" width="1" height="1" fill="#ababab"/><rect x="9" y="7" width="1" height="1" fill="#b2b2b2"/><rect x="10" y="7" width="1" height="1" fill="#bcbcbc"/><rect x="11" y="7" width="1" height="1" fill="#aaaaaa"/><rect x="0" y="8" width="1" height="1" fill="#b2b2b2"/><rect x="1" y="8" width="1" height="1" fill="#b7b7b7"/><rect x="2" y="8" width="1" height="1" fill="#ababab"/><rect x="3" y="8" width="1" height="1" fill="#a5a5a5"/><rect x="4" y="8" width="1" height="1" fill="#bababa"/><rect x="5" y="8" width="1" height="1" fill="#b1b1b1"/><rect x="6" y="8" width="1" height="1" fill="#b1b1b1"/><rect x="7" y="8" width="1" height="1" fill="#adadad"/><rect x="8" y="8" width="1" height="1" fill="#b9b9b9"/><rect x="9" y="8" width="1" height="1" fill="#bcbcbc"/><rect x="10" y="8" width="1" height="1" fill="#aaaaaa"/><rect x="11" y="8" width="1" height="1" fill="#aaaaaa"/><rect x="0" y="9" width="1" height="1" fill="#bbbbbb"/><rect x="1" y="9" width="1" height="1" fill="#aaaaaa"/><rect x="2" y="9" width="1" height="1" fill="#aeaeae"/><rect x="3" y="9" width="1" height="1" fill="#b7b7b7"/><rect x="4" y="9" width="1" height="1" fill="#b9b9b9"/><rect x="5" y="9" width="1" height="1" fill="#b1b1b1"/><rect x="6" y="9" width="1" height="1" fill="#acacac"/><rect x="7" y="9" width="1" height="1" fill="#b1b1b1"/><rect x="8" y="9" width="1" height="1" fill="#b1b1b1"/><rect x="9" y="9" width="1" height="1" fill="#a9a9a9"/><rect x="10" y="9" width="1" height="1" fill="#acacac"/><rect x="11" y="9" width="1" height="1" fill="#bbbbbb"/><rect x="0" y="10" width="1" height="1" fill="#afafaf"/><rect x="1" y="10" width="1" height="1" fill="#a6a6a6"/><rect x="2" y="10" width="1" height="1" fill="#b0b0b0"/><rect x="3" y="10" width="1" height="1" fill="#bbbbbb"/><rect x="4" y="10" width="1" height="1" fill="#b0b0b0"/><rect x="5" y="10" width="1" height="1" fill="#a9a9a9"/><rect x="6" y="10" width="1" height="1" fill="#bababa"/><rect x="7" y="10" width="1" height="1" fill="#b9b9b9"/><rect x="8" y="10" width="1" height="1" fill="#afafaf"/><rect x="9" y="10" width="1" height="1" fill="#acacac"/><rect x="10" y="10" width="1" height="1" fill="#b4b4b4"/><rect x="11" y="10" width="1" height="1" fill="#bbbbbb"/><rect x="0" y="11" width="1" height="1" fill="#ababab"/><rect x="1" y="11" width="1" height="1" fill="#bababa"/><rect x="2" y="11" width="1" height="1" fill="#b5b5b5"/><rect x="3" y="11" width="1" height="1" fill="#a5a5a5"/><rect x="4" y="11" width="1" height="1" fill="#acacac"/><rect x="5" y="11" width="1" height="1" fill="#b5b5b5"/><rect x="6" y="11" width="1" height="1" fill="#b2b2b2"/><rect x="7" y="11" width="1" height="1" fill="#aeaeae"/><rect x="8" y="11" width="1" height="1" fill="#a6a6a6"/><rect x="9" y="11" width="1" height="1" fill="#b7b7b7"/><rect x="10" y="11" width="1" height="1" fill="#b0b0b0"/><rect x="11" y="11" width="1" height="1" fill="#a8a8a8"/></pattern>
<pattern id="conc" width="8" height="8" patternUnits="userSpaceOnUse"><rect width="8" height="8" fill="#fff"/><g fill="#000"><circle cx="1.9" cy="4.4" r="0.6"/><circle cx="5.0" cy="0.5" r="0.7"/><path d="M2.1 1.9 l0.2 2.0" stroke="#000" stroke-width="0.8"/><circle cx="3.8" cy="5.1" r="0.7"/><path d="M6.9 4.2 l-0.6 0.9" stroke="#000" stroke-width="0.8"/><circle cx="6.1" cy="4.7" r="0.4"/><path d="M6.9 3.8 l-1.7 0.7" stroke="#000" stroke-width="0.8"/><path d="M7.4 3.2 l0.4 2.1" stroke="#000" stroke-width="0.8"/><circle cx="7.0" cy="0.8" r="0.5"/><path d="M7.7 3.5 l0.9 1.3" stroke="#000" stroke-width="0.8"/><path d="M3.1 2.8 l-0.5 2.0" stroke="#000" stroke-width="0.8"/><path d="M5.5 7.4 l-1.8 0.1" stroke="#000" stroke-width="0.8"/><path d="M1.3 6.9 l-1.6 0.5" stroke="#000" stroke-width="0.8"/><path d="M5.7 1.7 l-0.3 1.3" stroke="#000" stroke-width="0.8"/><path d="M0.5 6.8 l1.9 0.5" stroke="#000" stroke-width="0.8"/><circle cx="3.3" cy="1.2" r="0.7"/><path d="M7.0 0.4 l1.8 0.3" stroke="#000" stroke-width="0.8"/><path d="M2.6 7.0 l-0.0 2.2" stroke="#000" stroke-width="0.8"/><path d="M2.5 0.6 l1.2 0.1" stroke="#000" stroke-width="0.8"/><circle cx="3.3" cy="4.9" r="0.4"/><path d="M6.9 2.5 l-1.4 0.5" stroke="#000" stroke-width="0.8"/><path d="M3.7 4.2 l-0.5 1.6" stroke="#000" stroke-width="0.8"/><path d="M5.0 7.5 l0.4 1.8" stroke="#000" stroke-width="0.8"/><path d="M1.9 2.4 l-0.1 1.7" stroke="#000" stroke-width="0.8"/><path d="M0.1 3.3 l1.7 0.1" stroke="#000" stroke-width="0.8"/><path d="M5.1 0.5 l0.2 1.8" stroke="#000" stroke-width="0.8"/></g></pattern>
<clipPath id="pg"><rect x="206.5" y="136" width="326.5" height="355.5"/></clipPath>
<linearGradient id="trk" x1="0" x2="1"><stop offset="0" stop-color="#c4c4c4"/><stop offset="1" stop-color="#dedede"/></linearGradient>
</defs>
<rect x="3" y="134" width="734.5" height="357" fill="url(#tex)"/>
<linearGradient id="topsh" x1="0" y1="0" x2="0" y2="1"><stop offset="0" stop-color="#000" stop-opacity="0.16"/><stop offset="0.3" stop-color="#000" stop-opacity="0.08"/><stop offset="1" stop-color="#000" stop-opacity="0"/></linearGradient>
<rect x="3" y="134" width="734.5" height="150" fill="url(#topsh)"/>
<linearGradient id="topsh2" x1="0" y1="0" x2="0" y2="1"><stop offset="0" stop-color="#000" stop-opacity="0.45"/><stop offset="1" stop-color="#000" stop-opacity="0"/></linearGradient>
<rect x="3" y="134" width="734.5" height="3.5" fill="url(#topsh2)"/>
<path d="M61.3 119.2 l3.4 3.4 M64.7 119.2 l-3.4 3.4" stroke="#5a5a5a" stroke-width="1"/>
<path d="M71.8 123.8 h7.4 M75.5 120.1 v7.4" stroke="#fff" stroke-width="2"/>
<path d="M738 121 l6.5 6.3 M744.5 121 l-6.5 6.3" stroke="#fff" stroke-width="2"/>
<linearGradient id="shl" x1="0" x2="1"><stop offset="0" stop-color="#000" stop-opacity="0"/><stop offset="1" stop-color="#000" stop-opacity="0.45"/></linearGradient>
<linearGradient id="shr" x1="0" x2="1"><stop offset="0" stop-color="#000" stop-opacity="0.45"/><stop offset="1" stop-color="#000" stop-opacity="0"/></linearGradient>
<linearGradient id="sht" x1="0" y1="0" x2="0" y2="1"><stop offset="0" stop-color="#000" stop-opacity="0"/><stop offset="1" stop-color="#000" stop-opacity="0.28"/></linearGradient>
<rect x="200" y="134" width="6" height="358" fill="url(#shl)" opacity="1.6"/>
<rect x="533.5" y="134" width="6" height="358" fill="url(#shr)"/>
<rect x="206" y="134" width="328" height="1.5" fill="#000" opacity="0.25"/>
<rect x="206" y="135.5" width="327.5" height="356" fill="#fff" stroke="#4a4a4a" stroke-width="1.2"/>
<g clip-path="url(#pg)" fill="none" stroke="#000">
<path d="M293.6 303.0 L294.6 300.4 L295.7 297.9 L296.8 295.3 L297.9 292.8 L299.1 290.3 L300.3 287.8 L301.5 285.3 L302.8 282.9 L304.1 280.4 L305.4 278.0 L306.8 275.6 L308.2 273.2 L309.6 270.8 L311.1 268.5 L312.6 266.2 L314.1 263.8 L315.6 261.6 L317.2 259.3 L318.8 257.0 L320.5 254.8 L322.1 252.6 L323.8 250.4 L325.6 248.3 L327.3 246.1 L329.1 244.0 L330.9 241.9 L332.8 239.8 L334.6 237.8 L336.5 235.8 L338.5 233.8 L340.4 231.8 L342.4 229.9 L344.4 228.0 L346.4 226.1 L348.5 224.2 L350.5 222.4 L352.6 220.6 L354.7 218.8 L356.9 217.1 L359.1 215.4 L361.3 213.7 L363.5 212.0 L365.7 210.4 L368.0 208.8 L370.2 207.2 L372.5 205.7 L374.9 204.1 L377.2 202.7 L379.6 201.2 L381.9 199.8 L384.3 198.4 L386.7 197.1 L389.2 195.7 L391.6 194.5 L394.1 193.2 L396.6 192.0 L399.1 190.8 L401.6 189.6 L404.1 188.5 L406.7 187.4 L409.2 186.4 L411.8 185.3 L414.4 184.3 L417.0 183.4 L419.6 182.5 L422.2 181.6 L424.8 180.7 L427.5 179.9 L430.1 179.1 L432.8 178.4 L435.5 177.7 L438.2 177.0 L440.9 176.4 L443.6 175.8 L446.3 175.2 L449.0 174.7 L451.7 174.2 L454.4 173.7 L457.2 173.3 L459.9 172.9 L462.7 172.6 L465.4 172.3 L468.2 172.0 L470.9 171.8 L473.7 171.6 L476.4 171.4 L479.2 171.3 L482.0 171.2 L484.7 171.1 L487.5 171.1" stroke="url(#conc)" stroke-width="7"/>
<path d="M293.6 303.0 L294.6 300.4 L295.7 297.9 L296.8 295.3 L297.9 292.8 L299.1 290.3 L300.3 287.8 L301.5 285.3 L302.8 282.9 L304.1 280.4 L305.4 278.0 L306.8 275.6 L308.2 273.2 L309.6 270.8 L311.1 268.5 L312.6 266.2 L314.1 263.8 L315.6 261.6 L317.2 259.3 L318.8 257.0 L320.5 254.8 L322.1 252.6 L323.8 250.4 L325.6 248.3 L327.3 246.1 L329.1 244.0 L330.9 241.9 L332.8 239.8 L334.6 237.8 L336.5 235.8 L338.5 233.8 L340.4 231.8 L342.4 229.9 L344.4 228.0 L346.4 226.1 L348.5 224.2 L350.5 222.4 L352.6 220.6 L354.7 218.8 L356.9 217.1 L359.1 215.4 L361.3 213.7 L363.5 212.0 L365.7 210.4 L368.0 208.8 L370.2 207.2 L372.5 205.7 L374.9 204.1 L377.2 202.7 L379.6 201.2 L381.9 199.8 L384.3 198.4 L386.7 197.1 L389.2 195.7 L391.6 194.5 L394.1 193.2 L396.6 192.0 L399.1 190.8 L401.6 189.6 L404.1 188.5 L406.7 187.4 L409.2 186.4 L411.8 185.3 L414.4 184.3 L417.0 183.4 L419.6 182.5 L422.2 181.6 L424.8 180.7 L427.5 179.9 L430.1 179.1 L432.8 178.4 L435.5 177.7 L438.2 177.0 L440.9 176.4 L443.6 175.8 L446.3 175.2 L449.0 174.7 L451.7 174.2 L454.4 173.7 L457.2 173.3 L459.9 172.9 L462.7 172.6 L465.4 172.3 L468.2 172.0 L470.9 171.8 L473.7 171.6 L476.4 171.4 L479.2 171.3 L482.0 171.2 L484.7 171.1 L487.5 171.1" stroke="#000" stroke-width="7" opacity="0.08"/>
<path d="M289.8 303.0 L291.0 300.1 L292.2 297.1 L293.4 294.2 L294.7 291.4 L296.1 288.5 L297.4 285.7 L298.9 282.8 L300.3 280.0 L301.8 277.3 L303.4 274.5 L305.0 271.8 L306.6 269.1 L308.3 266.4 L310.0 263.7 L311.7 261.1 L313.5 258.5 L315.3 255.9 L317.2 253.4 L319.1 250.8 L321.0 248.3 L323.0 245.9 L325.0 243.4 L327.0 241.0 L329.1 238.7 L331.2 236.3 L333.4 234.0 L335.6 231.7 L337.8 229.5 L340.1 227.3 L342.3 225.1 L344.7 222.9 L347.0 220.8 L349.4 218.8 L351.8 216.7 L354.2 214.7 L356.7 212.7 L359.2 210.8 L361.7 208.9 L364.3 207.1 L366.9 205.3 L369.5 203.5 L372.1 201.7 L374.8 200.0 L377.5 198.4 L380.2 196.8 L382.9 195.2 L385.7 193.6 L388.5 192.2 L391.3 190.7 L394.1 189.3 L396.9 187.9 L399.8 186.6 L402.7 185.3 L405.6 184.1 L408.5 182.9 L411.5 181.7 L414.4 180.6 L417.4 179.5 L420.4 178.5 L423.4 177.5 L426.4 176.6 L429.4 175.7 L432.5 174.9 L435.5 174.1 L438.6 173.3 L441.7 172.6 L444.8 172.0 L447.9 171.3 L451.0 170.8 L454.1 170.3 L457.2 169.8 L460.3 169.3 L463.5 169.0 L466.6 168.6 L469.7 168.3 L472.9 168.1 L476.0 167.9 L479.2 167.8 L482.4 167.7 L485.5 167.6 L488.7 167.6 L491.8 167.6 L495.0 167.7 L498.1 167.9 L501.3 168.0 L504.4 168.3 L507.6 168.6 L510.7 168.9 L513.9 169.2 L517.0 169.7" stroke-width="1.1"/>
<path d="M296.2 306.0 L297.3 303.1 L298.5 300.2 L299.7 297.4 L301.0 294.6 L302.3 291.8 L303.6 289.0 L305.0 286.2 L306.4 283.5 L307.9 280.7 L309.4 278.0 L311.0 275.3 L312.6 272.7 L314.2 270.1 L315.9 267.4 L317.6 264.9 L319.4 262.3 L321.2 259.8 L323.0 257.3 L324.9 254.8 L326.8 252.4 L328.7 249.9 L330.7 247.6 L332.7 245.2 L334.7 242.9 L336.8 240.6 L339.0 238.3 L341.1 236.1 L343.3 233.9 L345.5 231.7 L347.8 229.6 L350.0 227.5 L352.4 225.5 L354.7 223.4 L357.1 221.4 L359.5 219.5 L361.9 217.6 L364.4 215.7 L366.9 213.8 L369.4 212.0 L371.9 210.3 L374.5 208.5 L377.1 206.9 L379.7 205.2 L382.4 203.6 L385.1 202.0 L387.8 200.5 L390.5 199.0 L393.2 197.6 L396.0 196.2 L398.8 194.8 L401.6 193.5 L404.4 192.2 L407.2 191.0 L410.1 189.8 L413.0 188.6 L415.9 187.5 L418.8 186.5 L421.7 185.4 L424.7 184.5 L427.6 183.5 L430.6 182.7 L433.6 181.8 L436.6 181.0 L439.6 180.3 L442.6 179.6 L445.6 178.9 L448.7 178.3 L451.7 177.7 L454.8 177.2 L457.8 176.8 L460.9 176.3 L464.0 176.0 L467.0 175.6 L470.1 175.3 L473.2 175.1 L476.3 174.9 L479.4 174.8 L482.5 174.7 L485.6 174.6 L488.7 174.6 L491.8 174.6 L494.9 174.7 L498.0 174.9 L501.1 175.1 L504.2 175.3 L507.3 175.6 L510.4 175.9 L513.4 176.2 L516.5 176.7 L519.6 177.1" stroke-width="1.1"/>
<path d="M301.3 306.0 L302.3 303.5 L303.3 301.1 L304.4 298.6 L305.5 296.2 L306.6 293.8 L307.8 291.4 L308.9 289.0 L310.2 286.7 L311.4 284.3 L312.7 282.0 L314.0 279.7 L315.3 277.4 L316.7 275.1 L318.1 272.9 L319.6 270.6 L321.0 268.4 L322.5 266.2 L324.0 264.0 L325.6 261.9 L327.1 259.7 L328.7 257.6 L330.4 255.5 L332.0 253.5 L333.7 251.4 L335.4 249.4 L337.2 247.4 L339.0 245.4 L340.7 243.4 L342.6 241.5 L344.4 239.6 L346.3 237.7 L348.2 235.8 L350.1 234.0 L352.0 232.2 L354.0 230.4 L356.0 228.6 L358.0 226.9 L360.1 225.2 L362.1 223.5 L364.2 221.9 L366.3 220.3 L368.4 218.7 L370.6 217.1 L372.7 215.6 L374.9 214.0 L377.1 212.6 L379.4 211.1 L381.6 209.7 L383.9 208.3 L386.2 206.9 L388.5 205.6 L390.8 204.3 L393.1 203.1 L395.5 201.8 L397.8 200.6 L400.2 199.4 L402.6 198.3 L405.0 197.2 L407.4 196.1 L409.9 195.1 L412.3 194.0 L414.8 193.1 L417.3 192.1 L419.8 191.2 L422.3 190.3 L424.8 189.5 L427.3 188.7 L429.9 187.9 L432.4 187.1 L435.0 186.4 L437.6 185.7 L440.1 185.1 L442.7 184.5 L445.3 183.9 L447.9 183.4 L450.5 182.8 L453.1 182.4 L455.8 181.9 L458.4 181.5 L461.0 181.2 L463.6 180.8 L466.3 180.5 L468.9 180.3 L471.6 180.0 L474.2 179.8 L476.9 179.7 L479.5 179.6 L482.2 179.5 L484.8 179.4 L487.5 179.4" stroke-width="1"/>
<path d="M296.2 305.0 L295.4 307.1 L294.6 309.3 L293.9 311.4 L293.1 313.6 L292.4 315.7 L291.7 317.9 L291.0 320.1 L290.4 322.2 L289.7 324.4 L289.1 326.6 L288.6 328.8 L288.0 331.1 L287.5 333.3 L287.0 335.5 L286.5 337.7 L286.1 339.9 L285.6 342.2 L285.2 344.4 L284.9 346.7 L284.5 348.9 L284.2 351.2 L283.9 353.4 L283.6 355.7 L283.3 358.0 L283.1 360.2 L282.9 362.5 L282.7 364.8 L282.6 367.0 L282.5 369.3 L282.4 371.6 L282.3 373.9 L282.2 376.1 L282.2 378.4 L282.2 380.7 L282.2 383.0 L282.3 385.3 L282.4 387.5 L282.5 389.8 L282.6 392.1 L282.7 394.4 L282.9 396.6 L283.1 398.9 L283.3 401.2 L283.6 403.4 L283.9 405.7 L284.2 407.9 L284.5 410.2 L284.8 412.4 L285.2 414.7 L285.6 416.9 L286.1 419.2 L286.5 421.4 L287.0 423.6 L287.5 425.9 L288.0 428.1 L288.6 430.3 L289.1 432.5 L289.7 434.7 L290.4 436.9 L291.0 439.1 L291.7 441.2 L292.4 443.4 L293.1 445.6 L293.8 447.7 L294.6 449.9 L295.4 452.0 L296.2 454.1 L297.0 456.2 L297.9 458.4 L298.8 460.4 L299.7 462.5 L300.6 464.6 L301.6 466.7 L302.6 468.7 L303.6 470.8 L304.6 472.8 L305.6 474.8 L306.7 476.9 L307.8 478.9 L308.9 480.8 L310.0 482.8 L311.2 484.8 L312.4 486.7 L313.6 488.7 L314.8 490.6 L316.0 492.5 L317.3 494.4 L318.6 496.3 L319.9 498.1 L321.2 500.0" stroke="url(#conc)" stroke-width="8.5"/>
<path d="M296.2 305.0 L295.4 307.1 L294.6 309.3 L293.9 311.4 L293.1 313.6 L292.4 315.7 L291.7 317.9 L291.0 320.1 L290.4 322.2 L289.7 324.4 L289.1 326.6 L288.6 328.8 L288.0 331.1 L287.5 333.3 L287.0 335.5 L286.5 337.7 L286.1 339.9 L285.6 342.2 L285.2 344.4 L284.9 346.7 L284.5 348.9 L284.2 351.2 L283.9 353.4 L283.6 355.7 L283.3 358.0 L283.1 360.2 L282.9 362.5 L282.7 364.8 L282.6 367.0 L282.5 369.3 L282.4 371.6 L282.3 373.9 L282.2 376.1 L282.2 378.4 L282.2 380.7 L282.2 383.0 L282.3 385.3 L282.4 387.5 L282.5 389.8 L282.6 392.1 L282.7 394.4 L282.9 396.6 L283.1 398.9 L283.3 401.2 L283.6 403.4 L283.9 405.7 L284.2 407.9 L284.5 410.2 L284.8 412.4 L285.2 414.7 L285.6 416.9 L286.1 419.2 L286.5 421.4 L287.0 423.6 L287.5 425.9 L288.0 428.1 L288.6 430.3 L289.1 432.5 L289.7 434.7 L290.4 436.9 L291.0 439.1 L291.7 441.2 L292.4 443.4 L293.1 445.6 L293.8 447.7 L294.6 449.9 L295.4 452.0 L296.2 454.1 L297.0 456.2 L297.9 458.4 L298.8 460.4 L299.7 462.5 L300.6 464.6 L301.6 466.7 L302.6 468.7 L303.6 470.8 L304.6 472.8 L305.6 474.8 L306.7 476.9 L307.8 478.9 L308.9 480.8 L310.0 482.8 L311.2 484.8 L312.4 486.7 L313.6 488.7 L314.8 490.6 L316.0 492.5 L317.3 494.4 L318.6 496.3 L319.9 498.1 L321.2 500.0" stroke="#000" stroke-width="8.5" opacity="0.08"/>
<path d="M287.1 303.0 L286.3 305.1 L285.6 307.3 L284.8 309.5 L284.1 311.6 L283.3 313.8 L282.6 316.0 L282.0 318.2 L281.3 320.4 L280.7 322.6 L280.1 324.8 L279.5 327.0 L279.0 329.2 L278.5 331.5 L278.0 333.7 L277.5 335.9 L277.0 338.2 L276.6 340.4 L276.2 342.7 L275.8 344.9 L275.5 347.2 L275.1 349.5 L274.8 351.7 L274.5 354.0 L274.3 356.3 L274.0 358.6 L273.8 360.9 L273.6 363.1 L273.5 365.4 L273.3 367.7 L273.2 370.0 L273.1 372.3 L273.1 374.6 L273.0 376.9 L273.0 379.2 L273.0 381.4 L273.0 383.7 L273.1 386.0 L273.2 388.3 L273.3 390.6 L273.4 392.9 L273.6 395.2 L273.7 397.5 L273.9 399.7 L274.2 402.0 L274.4 404.3 L274.7 406.6 L275.0 408.8 L275.3 411.1 L275.7 413.4 L276.0 415.6 L276.4 417.9 L276.9 420.1 L277.3 422.4 L277.8 424.6 L278.3 426.9 L278.8 429.1 L279.3 431.3 L279.9 433.5 L280.5 435.8 L281.1 438.0 L281.7 440.2 L282.4 442.4 L283.1 444.5 L283.8 446.7 L284.5 448.9 L285.3 451.1 L286.0 453.2 L286.8 455.4 L287.6 457.5 L288.5 459.6 L289.4 461.8 L290.2 463.9 L291.2 466.0 L292.1 468.1 L293.0 470.1 L294.0 472.2 L295.0 474.3 L296.0 476.3 L297.1 478.4 L298.2 480.4 L299.2 482.4 L300.4 484.4 L301.5 486.4 L302.6 488.4 L303.8 490.4 L305.0 492.3 L306.2 494.3 L307.4 496.2 L308.7 498.1 L310.0 500.0" stroke-width="1.1"/>
<path d="M290.6 303.0 L289.8 305.1 L289.0 307.3 L288.2 309.5 L287.4 311.6 L286.7 313.8 L286.0 316.0 L285.3 318.2 L284.7 320.4 L284.0 322.6 L283.4 324.8 L282.8 327.0 L282.3 329.2 L281.8 331.5 L281.2 333.7 L280.8 335.9 L280.3 338.2 L279.9 340.4 L279.4 342.7 L279.1 345.0 L278.7 347.2 L278.4 349.5 L278.0 351.8 L277.8 354.0 L277.5 356.3 L277.2 358.6 L277.0 360.9 L276.8 363.2 L276.7 365.5 L276.5 367.8 L276.4 370.0 L276.3 372.3 L276.3 374.6 L276.2 376.9 L276.2 379.2 L276.2 381.5 L276.2 383.8 L276.3 386.1 L276.4 388.4 L276.5 390.7 L276.6 393.0 L276.8 395.3 L277.0 397.6 L277.2 399.8 L277.4 402.1 L277.7 404.4 L277.9 406.7 L278.2 409.0 L278.6 411.2 L278.9 413.5 L279.3 415.8 L279.7 418.0 L280.1 420.3 L280.6 422.5 L281.1 424.8 L281.6 427.0 L282.1 429.2 L282.7 431.5 L283.2 433.7 L283.8 435.9 L284.5 438.1 L285.1 440.3 L285.8 442.5 L286.5 444.7 L287.2 446.9 L287.9 449.0 L288.7 451.2 L289.5 453.3 L290.3 455.5 L291.1 457.6 L292.0 459.8 L292.9 461.9 L293.8 464.0 L294.7 466.1 L295.7 468.2 L296.6 470.2 L297.6 472.3 L298.6 474.4 L299.7 476.4 L300.7 478.5 L301.8 480.5 L302.9 482.5 L304.1 484.5 L305.2 486.5 L306.4 488.4 L307.6 490.4 L308.8 492.3 L310.0 494.3 L311.3 496.2 L312.6 498.1 L313.9 500.0" stroke-width="0.9"/>
<path d="M291.7 305.0 L290.9 307.1 L290.2 309.3 L289.4 311.4 L288.7 313.6 L288.0 315.7 L287.3 317.9 L286.6 320.1 L286.0 322.2 L285.4 324.4 L284.8 326.6 L284.2 328.8 L283.7 331.0 L283.2 333.3 L282.7 335.5 L282.2 337.7 L281.8 339.9 L281.4 342.2 L281.0 344.4 L280.6 346.6 L280.3 348.9 L279.9 351.1 L279.6 353.4 L279.4 355.6 L279.1 357.9 L278.9 360.2 L278.7 362.4 L278.5 364.7 L278.4 367.0 L278.3 369.2 L278.2 371.5 L278.1 373.8 L278.0 376.1 L278.0 378.3 L278.0 380.6 L278.0 382.9 L278.1 385.1 L278.1 387.4 L278.2 389.7 L278.4 392.0 L278.5 394.2 L278.7 396.5 L278.9 398.8 L279.1 401.0 L279.3 403.3 L279.6 405.5 L279.9 407.8 L280.2 410.0 L280.6 412.3 L280.9 414.5 L281.3 416.8 L281.7 419.0 L282.2 421.2 L282.6 423.4 L283.1 425.7 L283.6 427.9 L284.2 430.1 L284.7 432.3 L285.3 434.5 L285.9 436.7 L286.6 438.9 L287.2 441.0 L287.9 443.2 L288.6 445.4 L289.3 447.5 L290.1 449.7 L290.8 451.8 L291.6 453.9 L292.5 456.1 L293.3 458.2 L294.2 460.3 L295.0 462.4 L296.0 464.4 L296.9 466.5 L297.8 468.6 L298.8 470.6 L299.8 472.7 L300.8 474.7 L301.9 476.7 L302.9 478.7 L304.0 480.7 L305.1 482.7 L306.3 484.7 L307.4 486.6 L308.6 488.6 L309.8 490.5 L311.0 492.4 L312.2 494.4 L313.5 496.3 L314.8 498.1 L316.1 500.0" stroke-width="1.1"/>
<path d="M300.9 305.0 L300.0 307.1 L299.2 309.3 L298.4 311.4 L297.7 313.6 L296.9 315.7 L296.2 317.9 L295.5 320.1 L294.9 322.2 L294.2 324.4 L293.6 326.6 L293.0 328.8 L292.4 331.1 L291.9 333.3 L291.4 335.5 L290.9 337.7 L290.4 340.0 L290.0 342.2 L289.6 344.5 L289.2 346.7 L288.8 349.0 L288.5 351.2 L288.2 353.5 L287.9 355.8 L287.7 358.0 L287.4 360.3 L287.2 362.6 L287.0 364.8 L286.9 367.1 L286.8 369.4 L286.7 371.7 L286.6 374.0 L286.5 376.2 L286.5 378.5 L286.5 380.8 L286.5 383.1 L286.6 385.4 L286.7 387.7 L286.8 389.9 L286.9 392.2 L287.1 394.5 L287.2 396.8 L287.4 399.1 L287.7 401.3 L287.9 403.6 L288.2 405.9 L288.5 408.1 L288.9 410.4 L289.2 412.6 L289.6 414.9 L290.0 417.1 L290.5 419.4 L290.9 421.6 L291.4 423.8 L291.9 426.1 L292.5 428.3 L293.0 430.5 L293.6 432.7 L294.3 434.9 L294.9 437.1 L295.6 439.3 L296.3 441.4 L297.0 443.6 L297.7 445.8 L298.5 447.9 L299.3 450.1 L300.1 452.2 L300.9 454.3 L301.8 456.4 L302.7 458.6 L303.6 460.6 L304.5 462.7 L305.5 464.8 L306.4 466.9 L307.4 468.9 L308.5 471.0 L309.5 473.0 L310.6 475.0 L311.7 477.0 L312.8 479.0 L313.9 481.0 L315.1 482.9 L316.3 484.9 L317.5 486.8 L318.7 488.8 L320.0 490.7 L321.2 492.6 L322.5 494.4 L323.9 496.3 L325.2 498.2 L326.6 500.0" stroke-width="1.1"/>
<path d="M457.5 558.1 L451.6 557.0 L445.7 555.6 L439.9 554.1 L434.1 552.4 L428.4 550.5 L422.7 548.4 L417.2 546.1 L411.7 543.6 L406.3 541.0 L400.9 538.2 L395.7 535.2 L390.6 532.0 L385.6 528.7 L380.7 525.2 L375.9 521.5 L371.2 517.7 L366.7 513.7 L362.3 509.6 L358.0 505.4 L353.9 501.0 L349.9 496.4 L346.1 491.8 L342.4 487.0 L338.9 482.1 L335.6 477.1 L332.4 472.0 L329.4 466.8 L326.6 461.5 L323.9 456.1 L321.4 450.6 L319.1 445.0 L317.0 439.4 L315.1 433.6 L313.4 427.9 L311.8 422.1 L310.5 416.2 L309.3 410.3 L308.4 404.3 L307.6 398.4 L307.0 392.4 L306.7 386.3 L306.5 380.3 L306.5 374.3 L306.8 368.3 L307.2 362.3 L307.8 356.3 L308.6 350.3 L309.7 344.4 L310.9 338.5 L312.3 332.6 L313.9 326.8 L315.7 321.1 L317.6 315.4 L319.8 309.8 L322.2 304.2 L324.7 298.7 L327.4 293.4 L330.3 288.1 L333.3 282.9 L336.6 277.8 L339.9 272.8 L343.5 268.0 L347.2 263.2 L351.1 258.6 L355.1 254.1 L359.3 249.8 L363.6 245.6 L368.0 241.5 L372.6 237.6 L377.3 233.8 L382.1 230.2 L387.0 226.7 L392.1 223.4 L397.2 220.3 L402.5 217.4 L407.8 214.6 L413.3 212.0 L418.8 209.6 L424.4 207.4 L430.1 205.3 L435.8 203.5 L441.6 201.8 L447.4 200.3 L453.3 199.1 L459.2 198.0 L465.2 197.1 L471.2 196.4 L477.2 195.9 L483.2 195.6 L489.2 195.5" stroke-width="1.3"/>
<path d="M487.5 161 V492" stroke-width="1.1" stroke-dasharray="13.5 3.2" stroke-dashoffset="-2"/>
<path d="M487.5 161 V197" stroke-width="1.1"/>
<path d="M377 175 V492" stroke="#333" stroke-width="1.2"/>
<path d="M369.3 320 V492" stroke="#cfcfcf" stroke-width="0.8"/>
<path d="M375 175 H487.5" stroke-width="1"/>
<path d="M296 306.5 H487.5" stroke-width="1.6"/>
<path d="M296 318 H487.5" stroke-width="1.4"/>
<path d="M285 381 H487.5" stroke-width="1.4"/>
<path d="M296 420 H487.5" stroke-width="1.6"/>
<path d="M296 431 H487.5" stroke-width="1.4"/>
<circle cx="377" cy="306.5" r="1.2" fill="#000" stroke="none"/>
<circle cx="377" cy="318" r="1.2" fill="#000" stroke="none"/>
<circle cx="377" cy="381" r="1.2" fill="#000" stroke="none"/>
<circle cx="377" cy="420" r="1.2" fill="#000" stroke="none"/>
<circle cx="377" cy="431" r="1.2" fill="#000" stroke="none"/>
<circle cx="487.5" cy="196" r="1.2" fill="#000" stroke="none"/>
<circle cx="487.5" cy="381" r="1.2" fill="#000" stroke="none"/>
<circle cx="375" cy="175" r="1.2" fill="#000" stroke="none"/>
<circle cx="310" cy="410" r="1.2" fill="#000" stroke="none"/>
<circle cx="318" cy="314" r="1.2" fill="#000" stroke="none"/>
<circle cx="273.5" cy="363.5" r="1.2" fill="#000" stroke="none"/>
<circle cx="413.3" cy="305.4" r="1.2" fill="#000" stroke="none"/>
<circle cx="413.5" cy="418.5" r="1.2" fill="#000" stroke="none"/>
<rect x="296.5" y="306" width="5.5" height="11.7" fill="#000" stroke="none"/>
<rect x="290.6" y="419.7" width="5.5" height="12.2" fill="#000" stroke="none"/>
<path d="M302 309 L318 314.3" stroke-width="1.2"/>
<path d="M279.7 415 L310.2 410.2" stroke-width="1.2"/>
<g stroke-width="1">
<path d="M275.4 281 H283.8 L294 298.7"/>
<path d="M254.2 297.8 H271.3 V306.1 M268.2 306.5 H282.7"/>
<path d="M249.9 358.7 Q257 358 273.5 363.5"/>
<path d="M248.8 412.8 H266.1 V421 M262.7 421 H277"/>
<path d="M269.5 445 H274.3 L285.1 436.6"/>
<path d="M343 280.5 L323 268.4"/>
<path d="M419.3 292 H415.8 L413.3 305.4"/>
<path d="M418.8 405.5 H415.5 L413.5 418.5"/>
<path d="M418.8 485 H413 L408 492"/>
<path d="M371 297 Q372 303 377 306.5"/>
<path d="M286.5 374 Q283 375 281 377"/>
</g>
<rect x="234.2" y="277.6" width="41.2" height="16.0" rx="1.5" fill="#fff" stroke="#c8c8c8" stroke-width="0.7"/>
<path d="M236.2 280.9 h35.3" stroke="#707070" stroke-width="0.75" stroke-dasharray="1.4 0.5 0.8 0.5"/>
<path d="M236.2 284.0 h35.3" stroke="#707070" stroke-width="0.75" stroke-dasharray="1.4 0.5 0.8 0.5"/>
<path d="M236.2 287.1 h35.3" stroke="#707070" stroke-width="0.75" stroke-dasharray="1.4 0.5 0.8 0.5"/>
<path d="M236.2 290.2 h26.0" stroke="#707070" stroke-width="0.75" stroke-dasharray="1.4 0.5 0.8 0.5"/>
<rect x="234.2" y="295.5" width="20.0" height="5.2" rx="1.5" fill="#fff" stroke="#c8c8c8" stroke-width="0.7"/>
<path d="M236.2 298.0 h11.2" stroke="#707070" stroke-width="0.75" stroke-dasharray="1.4 0.5 0.8 0.5"/>
<rect x="343.6" y="278" width="23.3" height="5.3" rx="1.5" fill="#fff" stroke="#c8c8c8" stroke-width="0.7"/>
<path d="M345.6 280.6 h13.5" stroke="#707070" stroke-width="0.75" stroke-dasharray="1.4 0.5 0.8 0.5"/>
<rect x="419.3" y="289.3" width="47.1" height="12.2" rx="1.5" fill="#fff" stroke="#c8c8c8" stroke-width="0.7"/>
<path d="M421.3 292.4 h40.9" stroke="#707070" stroke-width="0.75" stroke-dasharray="1.4 0.5 0.8 0.5"/>
<path d="M421.3 295.3 h40.9" stroke="#707070" stroke-width="0.75" stroke-dasharray="1.4 0.5 0.8 0.5"/>
<path d="M421.3 298.2 h30.2" stroke="#707070" stroke-width="0.75" stroke-dasharray="1.4 0.5 0.8 0.5"/>
<rect x="227.5" y="356.5" width="22.4" height="6.1" rx="1.5" fill="#fff" stroke="#c8c8c8" stroke-width="0.7"/>
<path d="M229.5 359.5 h12.9" stroke="#707070" stroke-width="0.75" stroke-dasharray="1.4 0.5 0.8 0.5"/>
<rect x="227.5" y="409.8" width="21.3" height="6.5" rx="1.5" fill="#fff" stroke="#c8c8c8" stroke-width="0.7"/>
<path d="M229.5 413.0 h12.1" stroke="#707070" stroke-width="0.75" stroke-dasharray="1.4 0.5 0.8 0.5"/>
<rect x="227.5" y="442.7" width="42.0" height="15.4" rx="1.5" fill="#fff" stroke="#c8c8c8" stroke-width="0.7"/>
<path d="M229.5 445.9 h36.1" stroke="#707070" stroke-width="0.75" stroke-dasharray="1.4 0.5 0.8 0.5"/>
<path d="M229.5 448.9 h36.1" stroke="#707070" stroke-width="0.75" stroke-dasharray="1.4 0.5 0.8 0.5"/>
<path d="M229.5 451.8 h36.1" stroke="#707070" stroke-width="0.75" stroke-dasharray="1.4 0.5 0.8 0.5"/>
<path d="M229.5 454.8 h26.6" stroke="#707070" stroke-width="0.75" stroke-dasharray="1.4 0.5 0.8 0.5"/>
<rect x="418.8" y="402.9" width="47.2" height="12.7" rx="1.5" fill="#fff" stroke="#c8c8c8" stroke-width="0.7"/>
<path d="M420.8 406.1 h41.0" stroke="#707070" stroke-width="0.75" stroke-dasharray="1.4 0.5 0.8 0.5"/>
<path d="M420.8 409.2 h41.0" stroke="#707070" stroke-width="0.75" stroke-dasharray="1.4 0.5 0.8 0.5"/>
<path d="M420.8 412.3 h30.2" stroke="#707070" stroke-width="0.75" stroke-dasharray="1.4 0.5 0.8 0.5"/>
<rect x="418.8" y="482.8" width="42.0" height="13.2" rx="1.5" fill="#fff" stroke="#c8c8c8" stroke-width="0.7"/>
<path d="M420.8 486.9 h36.1" stroke="#707070" stroke-width="0.75" stroke-dasharray="1.4 0.5 0.8 0.5"/>
<path d="M420.8 491.8 h26.6" stroke="#707070" stroke-width="0.75" stroke-dasharray="1.4 0.5 0.8 0.5"/>
<rect x="378.8" y="375" width="24.5" height="5.2" rx="1.5" fill="#fff" stroke="#c8c8c8" stroke-width="0.7"/>
<path d="M380.8 377.5 h14.3" stroke="#707070" stroke-width="0.75" stroke-dasharray="1.4 0.5 0.8 0.5"/>
<rect x="286.5" y="370.7" width="6.8" height="6.8" rx="1.5" fill="#fff" stroke="#c8c8c8" stroke-width="0.7"/>
<rect x="424.5" y="248.3" width="31.1" height="8.7" rx="2" fill="#fff" stroke="#cfcfcf" stroke-width="0.8"/>
<rect x="424.3" y="348.3" width="36.5" height="8.7" rx="2" fill="#fff" stroke="#cfcfcf" stroke-width="0.8"/>
<rect x="424.3" y="454" width="30.5" height="7.9" rx="2" fill="#fff" stroke="#cfcfcf" stroke-width="0.8"/>
<text x="427.5" y="255.3" font-family="Liberation Sans" font-size="5.6" fill="#333" stroke="none" textLength="25.5" lengthAdjust="spacingAndGlyphs">BEDROOMS</text>
<text x="427" y="355.3" font-family="Liberation Sans" font-size="5.6" fill="#333" stroke="none" textLength="31" lengthAdjust="spacingAndGlyphs">LIVING ROOM</text>
<text x="427" y="460.2" font-family="Liberation Sans" font-size="5.6" fill="#333" stroke="none" textLength="25" lengthAdjust="spacingAndGlyphs">BASEMENT</text>
<rect x="370.8" y="238.7" width="4.5" height="15.7" rx="1" fill="#fff" stroke="#cfcfcf" stroke-width="0.6"/>
<path d="M373.1 240.7 V252.4" stroke="#888" stroke-width="0.8" stroke-dasharray="1.5 0.8"/>
<rect x="369" y="289.3" width="5.0" height="8.7" rx="1" fill="#fff" stroke="#cfcfcf" stroke-width="0.6"/>
<path d="M371.5 291.3 V296.0" stroke="#888" stroke-width="0.8" stroke-dasharray="1.5 0.8"/>
<rect x="369" y="307.6" width="5.0" height="8.7" rx="1" fill="#fff" stroke="#cfcfcf" stroke-width="0.6"/>
<path d="M371.5 309.6 V314.3" stroke="#888" stroke-width="0.8" stroke-dasharray="1.5 0.8"/>
<rect x="371.5" y="360" width="4.0" height="16.0" rx="1" fill="#fff" stroke="#cfcfcf" stroke-width="0.6"/>
<path d="M373.5 362.0 V374.0" stroke="#888" stroke-width="0.8" stroke-dasharray="1.5 0.8"/>
<rect x="371.5" y="472" width="4.0" height="16.0" rx="1" fill="#fff" stroke="#cfcfcf" stroke-width="0.6"/>
<path d="M373.5 474.0 V486.0" stroke="#888" stroke-width="0.8" stroke-dasharray="1.5 0.8"/>
<rect x="302" y="355" width="4.0" height="13.0" rx="1" fill="#fff" stroke="#cfcfcf" stroke-width="0.6"/>
<path d="M304.0 357.0 V366.0" stroke="#888" stroke-width="0.8" stroke-dasharray="1.5 0.8"/>
<g transform="translate(386,223) rotate(-28)"><rect x="-8" y="-3" width="16" height="6" rx="1" fill="#fff" stroke="#cfcfcf" stroke-width="0.6"/><path d="M-6 0 h12" stroke="#999" stroke-width="0.8" stroke-dasharray="1.5 0.8"/></g>
<g transform="translate(332,466) rotate(-62)"><rect x="-8" y="-3" width="16" height="6" rx="1" fill="#fff" stroke="#cfcfcf" stroke-width="0.6"/><path d="M-6 0 h12" stroke="#999" stroke-width="0.8" stroke-dasharray="1.5 0.8"/></g>
</g>
<rect x="737.5" y="134" width="10.5" height="357" fill="url(#tex)"/>
<rect x="737.5" y="134" width="10.5" height="357" fill="#fff" opacity="0.32"/>
<line x1="737.5" y1="134" x2="737.5" y2="491" stroke="#6a6a6a" stroke-width="1"/>
<rect x="738" y="133.5" width="9.5" height="9.5" fill="#fff" stroke="#d8d8d8" stroke-width="0.6"/>
<path d="M740 139.8 l2.75 -2.6 2.75 2.6" fill="none" stroke="#333" stroke-width="1.2"/>
<rect x="738" y="144.2" width="9.5" height="15" fill="#fafafa" stroke="#d8d8d8" stroke-width="0.6"/>
<path d="M741 149 h4.5 M741 150.8 h4.5 M741 152.6 h4.5" stroke="#b8b8b8" stroke-width="1"/>
<rect x="738" y="482" width="9.5" height="9.3" fill="#fff" stroke="#d8d8d8" stroke-width="0.6"/>
<path d="M740 485 l2.75 2.6 2.75 -2.6" fill="none" stroke="#333" stroke-width="1.2"/>
</svg>
<svg class="a" style="left:0;top:0" width="750" height="516" viewBox="0 0 750 516">
<defs><linearGradient id="cream2" x1="0" y1="0" x2="1" y2="1"><stop offset="0.45" stop-color="#fdfbf5"/><stop offset="0.55" stop-color="#f3e3c3"/></linearGradient>
<linearGradient id="yel2" x1="0" y1="0" x2="0" y2="1"><stop offset="0" stop-color="#fcedb5"/><stop offset="1" stop-color="#f7d983"/></linearGradient></defs>
<path d="M4.4 494.3 V505.5" stroke="#dcdcdc" stroke-width="3" stroke-dasharray="1 1"/>
<path d="M3.4 507 v4.5 M7.9 507 l-3.3 2.25 3.3 2.25z" stroke="#888" stroke-width="1" fill="#888"/>
<path d="M19.40 500.10 L19.31 500.91 L20.52 501.42 L20.04 502.58 L18.82 502.08 L18.32 502.72 L17.68 503.22 L18.18 504.44 L17.02 504.92 L16.51 503.71 L15.70 503.80 L14.89 503.71 L14.38 504.92 L13.22 504.44 L13.72 503.22 L13.08 502.72 L12.58 502.08 L11.36 502.58 L10.88 501.42 L12.09 500.91 L12.00 500.10 L12.09 499.29 L10.88 498.78 L11.36 497.62 L12.58 498.12 L13.08 497.48 L13.72 496.98 L13.22 495.76 L14.38 495.28 L14.89 496.49 L15.70 496.40 L16.51 496.49 L17.02 495.28 L18.18 495.76 L17.68 496.98 L18.32 497.48 L18.82 498.12 L20.04 497.62 L20.52 498.78 L19.31 499.29Z M15.7 498.20 a1.90 1.90 0 1 0 0.01 0z" fill="#8d826f" fill-rule="evenodd"/>
<path d="M25.33 506.60 L25.25 507.33 L26.34 507.79 L25.91 508.83 L24.81 508.38 L24.35 508.95 L23.78 509.41 L24.23 510.51 L23.19 510.94 L22.73 509.85 L22.00 509.93 L21.27 509.85 L20.81 510.94 L19.77 510.51 L20.22 509.41 L19.65 508.95 L19.19 508.38 L18.09 508.83 L17.66 507.79 L18.75 507.33 L18.67 506.60 L18.75 505.87 L17.66 505.41 L18.09 504.37 L19.19 504.82 L19.65 504.25 L20.22 503.79 L19.77 502.69 L20.81 502.26 L21.27 503.35 L22.00 503.27 L22.73 503.35 L23.19 502.26 L24.23 502.69 L23.78 503.79 L24.35 504.25 L24.81 504.82 L25.91 504.37 L26.34 505.41 L25.25 505.87Z M22 504.89 a1.71 1.71 0 1 0 0.01 0z" fill="#f5a623" fill-rule="evenodd"/>
<path d="M70 502.3 h3.6 l-1.8 2z" fill="#444"/>
<path d="M80.0 494.3 V505.5" stroke="#dcdcdc" stroke-width="3" stroke-dasharray="1 1"/>
<path d="M79.0 507 v4.5 M83.5 507 l-3.3 2.25 3.3 2.25z" stroke="#888" stroke-width="1" fill="#888"/>
<circle cx="93.3" cy="503" r="7.4" fill="#f5f5f5" stroke="#d8d2c6" stroke-width="1.1"/>
<path d="M90.5 499.5 v7 M96 499.5 l-3.5 3.5 3.5 3.5" fill="none" stroke="#8cc0ea" stroke-width="1.4"/>
<circle cx="113" cy="503" r="7.4" fill="#f5f5f5" stroke="#d8d2c6" stroke-width="1.1"/>
<path d="M114.7 499.5 l-3.5 3.5 3.5 3.5" fill="none" stroke="#8cc0ea" stroke-width="1.4"/>
<rect x="123.8" y="495.5" width="62.8" height="15" rx="2" fill="#fff" stroke="#a9a9a9" stroke-width="1"/>
<path d="M179.3 498.2 L176 507.6" stroke="#666" stroke-width="0.9"/>
<circle cx="197" cy="503" r="7.4" fill="#f5f5f5" stroke="#a89d88" stroke-width="1.1"/>
<path d="M196 499.7 l3.5 3.5 -3.5 3.5" fill="none" stroke="#3d8fd8" stroke-width="1.6"/>
<circle cx="217" cy="503" r="7.4" fill="#f5f5f5" stroke="#a89d88" stroke-width="1.1"/>
<path d="M213.9 499.7 l3.2 3.5 -3.2 3.5 M219.4 499.5 v7.4" fill="none" stroke="#3d8fd8" stroke-width="1.6"/>
<line x1="229.5" y1="494" x2="229.5" y2="512" stroke="#dedede"/>
<circle cx="241.8" cy="503" r="7.4" fill="#f5f5f5" stroke="#9c927f" stroke-width="1.1"/>
<path d="M237.6 503 h8.5 M241.3 499.2 l-3.7 3.8 3.7 3.8" fill="none" stroke="#6aab2e" stroke-width="1.6"/>
<circle cx="261.2" cy="503" r="7.4" fill="#f5f5f5" stroke="#d8d2c6" stroke-width="1.1"/>
<path d="M265.4 503 h-8.5 M261.7 499.2 l3.7 3.8 -3.7 3.8" fill="none" stroke="#a8d08a" stroke-width="1.6"/>
<path d="M274.5 494.3 V505.5" stroke="#dcdcdc" stroke-width="3" stroke-dasharray="1 1"/>
<path d="M273.5 507 v4.5 M278 507 l-3.3 2.25 3.3 2.25z" stroke="#888" stroke-width="1" fill="#888"/>
<rect x="279.5" y="493.8" width="18.5" height="19" rx="1.5" fill="url(#yel2)" stroke="#b59f6f" stroke-width="1.1"/>
<path d="M283.5 496 h7.5 l3.2 3.2 v11.5 h-10.7z" fill="#fff" stroke="#8d826f" stroke-width="0.9"/>
<path d="M291 496 l3.2 3.2" stroke="#444" stroke-width="1.3"/>
<g fill="#fff" stroke="#a09580" stroke-width="0.9"><path d="M302.5 495.5 v4.5 h11 v-4.5"/><path d="M302.5 510.5 v-7.5 h7.8 l3.2 3.2 v4.3"/><path d="M319 497.5 h5.5 l2.5 2.5 v7.8 h-8z"/><path d="M328.3 497.5 h5.5 l2.5 2.5 v7.8 h-8z"/><path d="M339.5 495.5 v4.5 h8 v-4.5 M348.5 495.5 v4.5 h8 v-4.5"/><path d="M339.5 510.5 v-7.5 h5.5 l2.5 2.5 v5 M348.5 510.5 v-7.5 h5.5 l2.5 2.5 v5"/></g>
<g stroke="#333" stroke-width="1.1"><path d="M310.3 503 l3.2 3.2 M324.5 497.5 l2.5 2.5 M333.8 497.5 l2.5 2.5 M345 503 l2.5 2.5 M354 503 l2.5 2.5"/></g>
<path d="M523.3 494.3 V505.5" stroke="#dcdcdc" stroke-width="3" stroke-dasharray="1 1"/>
<path d="M522.3 507 v4.5 M526.8 507 l-3.3 2.25 3.3 2.25z" stroke="#888" stroke-width="1" fill="#888"/>
<rect x="528.5" y="495.5" width="57" height="15" rx="2" fill="#fff" stroke="#a9a9a9" stroke-width="1"/>
<path d="M577 502 h5 l-2.5 2.6z" fill="#555"/>
<line x1="588.8" y1="494" x2="588.8" y2="512" stroke="#e0e0e0"/>
<circle cx="600.8" cy="503" r="7.5" fill="url(#cream2)" stroke="#9c927f" stroke-width="1.1"/>
<path d="M596.5 503 h8.6" stroke="#3d8fd8" stroke-width="1.4"/>
<path d="M612 503.6 H682.4" stroke="#a5a5a5" stroke-width="1"/>
<rect x="644.5" y="495.5" width="5.2" height="15.8" rx="2" fill="#fafafa" stroke="#8d8d8d" stroke-width="0.9"/>
<circle cx="694" cy="503" r="7.5" fill="url(#cream2)" stroke="#9c927f" stroke-width="1.1"/>
<path d="M689.7 503 h8.6 M694 498.7 v8.6" stroke="#3d8fd8" stroke-width="1.4"/>
<path d="M707.3 494.3 V505.5" stroke="#dcdcdc" stroke-width="3" stroke-dasharray="1 1"/>
<path d="M706.3 507 v4.5 M710.8 507 l-3.3 2.25 3.3 2.25z" stroke="#888" stroke-width="1" fill="#888"/>
<rect x="713.5" y="499" width="10.8" height="9" rx="1" fill="#fff" stroke="#5aa0dc" stroke-width="1"/>
<rect x="713.5" y="499" width="10.8" height="1.6" fill="#5aa0dc"/>
<path d="M733.5 502.3 h3.6 l-1.8 2z" fill="#777"/>
<path d="M742 493.5 h4.5 M742 495.3 l2.25 2.2 2.25 -2.2z" stroke="#555" stroke-width="0.8" fill="#555"/>
</svg>
<svg class="a" style="left:0;top:0" width="750" height="516" viewBox="0 0 750 516" font-family="Liberation Sans">
<text x="361.8" y="14.5" font-size="9.8" fill="#3a3a3a" textLength="129.6" lengthAdjust="spacingAndGlyphs" stroke="#3a3a3a" stroke-width="0.12" >Architecture - PDF-XChange Editor</text>
<text x="13.3" y="34.8" font-size="9.3" fill="#ffffff" textLength="12.9" lengthAdjust="spacingAndGlyphs" stroke="#ffffff" stroke-width="0.12" >File</text>
<text x="47.3" y="34.8" font-size="9.3" fill="#101018" textLength="23.9" lengthAdjust="spacingAndGlyphs" stroke="#101018" stroke-width="0.12" >Home</text>
<text x="83.0" y="34.8" font-size="9.3" fill="#2b62a4" textLength="18.5" lengthAdjust="spacingAndGlyphs" stroke="#2b62a4" stroke-width="0.12" >View</text>
<text x="113.5" y="34.8" font-size="9.3" fill="#101018" textLength="38.2" lengthAdjust="spacingAndGlyphs" stroke="#101018" stroke-width="0.12" >Comment</text>
<text x="163.9" y="34.8" font-size="9.3" fill="#101018" textLength="26.8" lengthAdjust="spacingAndGlyphs" stroke="#101018" stroke-width="0.12" >Protect</text>
<text x="203.2" y="34.8" font-size="9.3" fill="#101018" textLength="20.0" lengthAdjust="spacingAndGlyphs" stroke="#101018" stroke-width="0.12" >Form</text>
<text x="235.8" y="34.8" font-size="9.3" fill="#101018" textLength="33.2" lengthAdjust="spacingAndGlyphs" stroke="#101018" stroke-width="0.12" >Organize</text>
<text x="281.1" y="34.8" font-size="9.3" fill="#101018" textLength="30.1" lengthAdjust="spacingAndGlyphs" stroke="#101018" stroke-width="0.12" >Convert</text>
<text x="322.7" y="34.8" font-size="9.3" fill="#101018" textLength="21.7" lengthAdjust="spacingAndGlyphs" stroke="#101018" stroke-width="0.12" >Share</text>
<text x="355.8" y="34.8" font-size="9.3" fill="#101018" textLength="27.4" lengthAdjust="spacingAndGlyphs" stroke="#101018" stroke-width="0.12" >Review</text>
<text x="394.7" y="34.8" font-size="9.3" fill="#101018" textLength="42.0" lengthAdjust="spacingAndGlyphs" stroke="#101018" stroke-width="0.12" >Bookmarks</text>
<text x="449.1" y="34.8" font-size="9.3" fill="#101018" textLength="17.9" lengthAdjust="spacingAndGlyphs" stroke="#101018" stroke-width="0.12" >Help</text>
<text x="645.9" y="34.8" font-size="9.3" fill="#101018" textLength="23.7" lengthAdjust="spacingAndGlyphs" stroke="#101018" stroke-width="0.12" >Find...</text>
<text x="690.7" y="34.8" font-size="9.3" fill="#101018" textLength="32.2" lengthAdjust="spacingAndGlyphs" stroke="#101018" stroke-width="0.12" >Search...</text>
<text x="21.4" y="56.8" font-size="9.3" fill="#101018" textLength="20.7" lengthAdjust="spacingAndGlyphs" stroke="#101018" stroke-width="0.12" >Hand</text>
<text x="21.1" y="76.5" font-size="9.3" fill="#101018" textLength="39.3" lengthAdjust="spacingAndGlyphs" stroke="#101018" stroke-width="0.12" >Select Text</text>
<text x="21.1" y="96.2" font-size="9.3" fill="#101018" textLength="43.5" lengthAdjust="spacingAndGlyphs" stroke="#101018" stroke-width="0.12" >Other Tools</text>
<text x="28.9" y="111.7" font-size="9.3" fill="#8c8c8c" textLength="18.6" lengthAdjust="spacingAndGlyphs" stroke="#8c8c8c" stroke-width="0.12" >Tools</text>
<text x="102.1" y="76.7" font-size="9.3" fill="#101018" textLength="52.1" lengthAdjust="spacingAndGlyphs" stroke="#101018" stroke-width="0.12" >Previous View</text>
<text x="102.1" y="95.9" font-size="9.3" fill="#9a9a9a" textLength="37.1" lengthAdjust="spacingAndGlyphs" stroke="#9a9a9a" stroke-width="0.12" >Next View</text>
<text x="143.7" y="111.8" font-size="9.3" fill="#8c8c8c" textLength="20.7" lengthAdjust="spacingAndGlyphs" stroke="#8c8c8c" stroke-width="0.12" >Go To</text>
<text x="238.7" y="90.7" font-size="9.3" fill="#101018" textLength="24.0" lengthAdjust="spacingAndGlyphs" stroke="#101018" stroke-width="0.12" >Actual</text>
<text x="243.3" y="99.7" font-size="9.3" fill="#101018" textLength="14.8" lengthAdjust="spacingAndGlyphs" stroke="#101018" stroke-width="0.12" >Size</text>
<text x="288.7" y="57.0" font-size="9.3" fill="#101018" textLength="30.3" lengthAdjust="spacingAndGlyphs" stroke="#101018" stroke-width="0.12" >Fit Page</text>
<text x="288.7" y="76.4" font-size="9.3" fill="#101018" textLength="34.3" lengthAdjust="spacingAndGlyphs" stroke="#101018" stroke-width="0.12" >Fit Width</text>
<text x="288.7" y="96.3" font-size="9.3" fill="#101018" textLength="36.0" lengthAdjust="spacingAndGlyphs" stroke="#101018" stroke-width="0.12" >Fit Visible</text>
<text x="329.8" y="57.0" font-size="9.3" fill="#101018" textLength="19.9" lengthAdjust="spacingAndGlyphs" stroke="#101018" stroke-width="0.12" >100%</text>
<text x="346.4" y="76.4" font-size="9.3" fill="#101018" textLength="32.0" lengthAdjust="spacingAndGlyphs" stroke="#101018" stroke-width="0.12" >Zoom In</text>
<text x="346.4" y="96.3" font-size="9.3" fill="#101018" textLength="39.3" lengthAdjust="spacingAndGlyphs" stroke="#101018" stroke-width="0.12" >Zoom Out</text>
<text x="309.0" y="111.8" font-size="9.3" fill="#8c8c8c" textLength="20.9" lengthAdjust="spacingAndGlyphs" stroke="#8c8c8c" stroke-width="0.12" >Zoom</text>
<text x="419.9" y="90.7" font-size="9.3" fill="#101018" textLength="24.8" lengthAdjust="spacingAndGlyphs" stroke="#101018" stroke-width="0.12" >Rotate</text>
<text x="419.6" y="99.7" font-size="9.3" fill="#101018" textLength="18.6" lengthAdjust="spacingAndGlyphs" stroke="#101018" stroke-width="0.12" >View</text>
<text x="492.0" y="111.8" font-size="9.3" fill="#8c8c8c" textLength="46.2" lengthAdjust="spacingAndGlyphs" stroke="#8c8c8c" stroke-width="0.12" >Page Display</text>
<text x="641.9" y="56.7" font-size="9.3" fill="#101018" textLength="58.9" lengthAdjust="spacingAndGlyphs" stroke="#101018" stroke-width="0.12" >Document Tabs</text>
<text x="641.9" y="76.4" font-size="9.3" fill="#101018" textLength="22.5" lengthAdjust="spacingAndGlyphs" stroke="#101018" stroke-width="0.12" >Panes</text>
<text x="641.9" y="96.3" font-size="9.3" fill="#9a9a9a" textLength="33.1" lengthAdjust="spacingAndGlyphs" stroke="#9a9a9a" stroke-width="0.12" >Portfolio</text>
<text x="650.9" y="111.6" font-size="9.3" fill="#8c8c8c" textLength="32.1" lengthAdjust="spacingAndGlyphs" stroke="#8c8c8c" stroke-width="0.12" >Window</text>
<text x="169.2" y="56.8" font-size="9.3" fill="#1c1c28" textLength="3.6" lengthAdjust="spacingAndGlyphs" stroke="#1c1c28" stroke-width="0.12" >1</text>
<text x="178.4" y="54.8" font-size="6" fill="#777777" textLength="4.2" lengthAdjust="spacingAndGlyphs" stroke="#777777" stroke-width="0.12" >9</text>
<text x="171.0" y="506.2" font-size="9.3" fill="#1c1c28" textLength="3.0" lengthAdjust="spacingAndGlyphs" stroke="#1c1c28" stroke-width="0.12" >1</text>
<text x="180.1" y="504.0" font-size="6" fill="#777777" textLength="3.8" lengthAdjust="spacingAndGlyphs" stroke="#777777" stroke-width="0.12" >9</text>
<text x="5.4" y="126.3" font-size="9.3" fill="#1c1c28" textLength="46.1" lengthAdjust="spacingAndGlyphs" stroke="#1c1c28" stroke-width="0.12" >Architecture</text>
<text x="29.1" y="506.0" font-size="9.3" fill="#1c1c28" textLength="36.1" lengthAdjust="spacingAndGlyphs" stroke="#1c1c28" stroke-width="0.12" >Options...</text>
<text x="530.4" y="506.5" font-size="9.3" fill="#1c1c28" textLength="20.5" lengthAdjust="spacingAndGlyphs" stroke="#1c1c28" stroke-width="0.12" >100%</text>
</svg>
</body></html>
